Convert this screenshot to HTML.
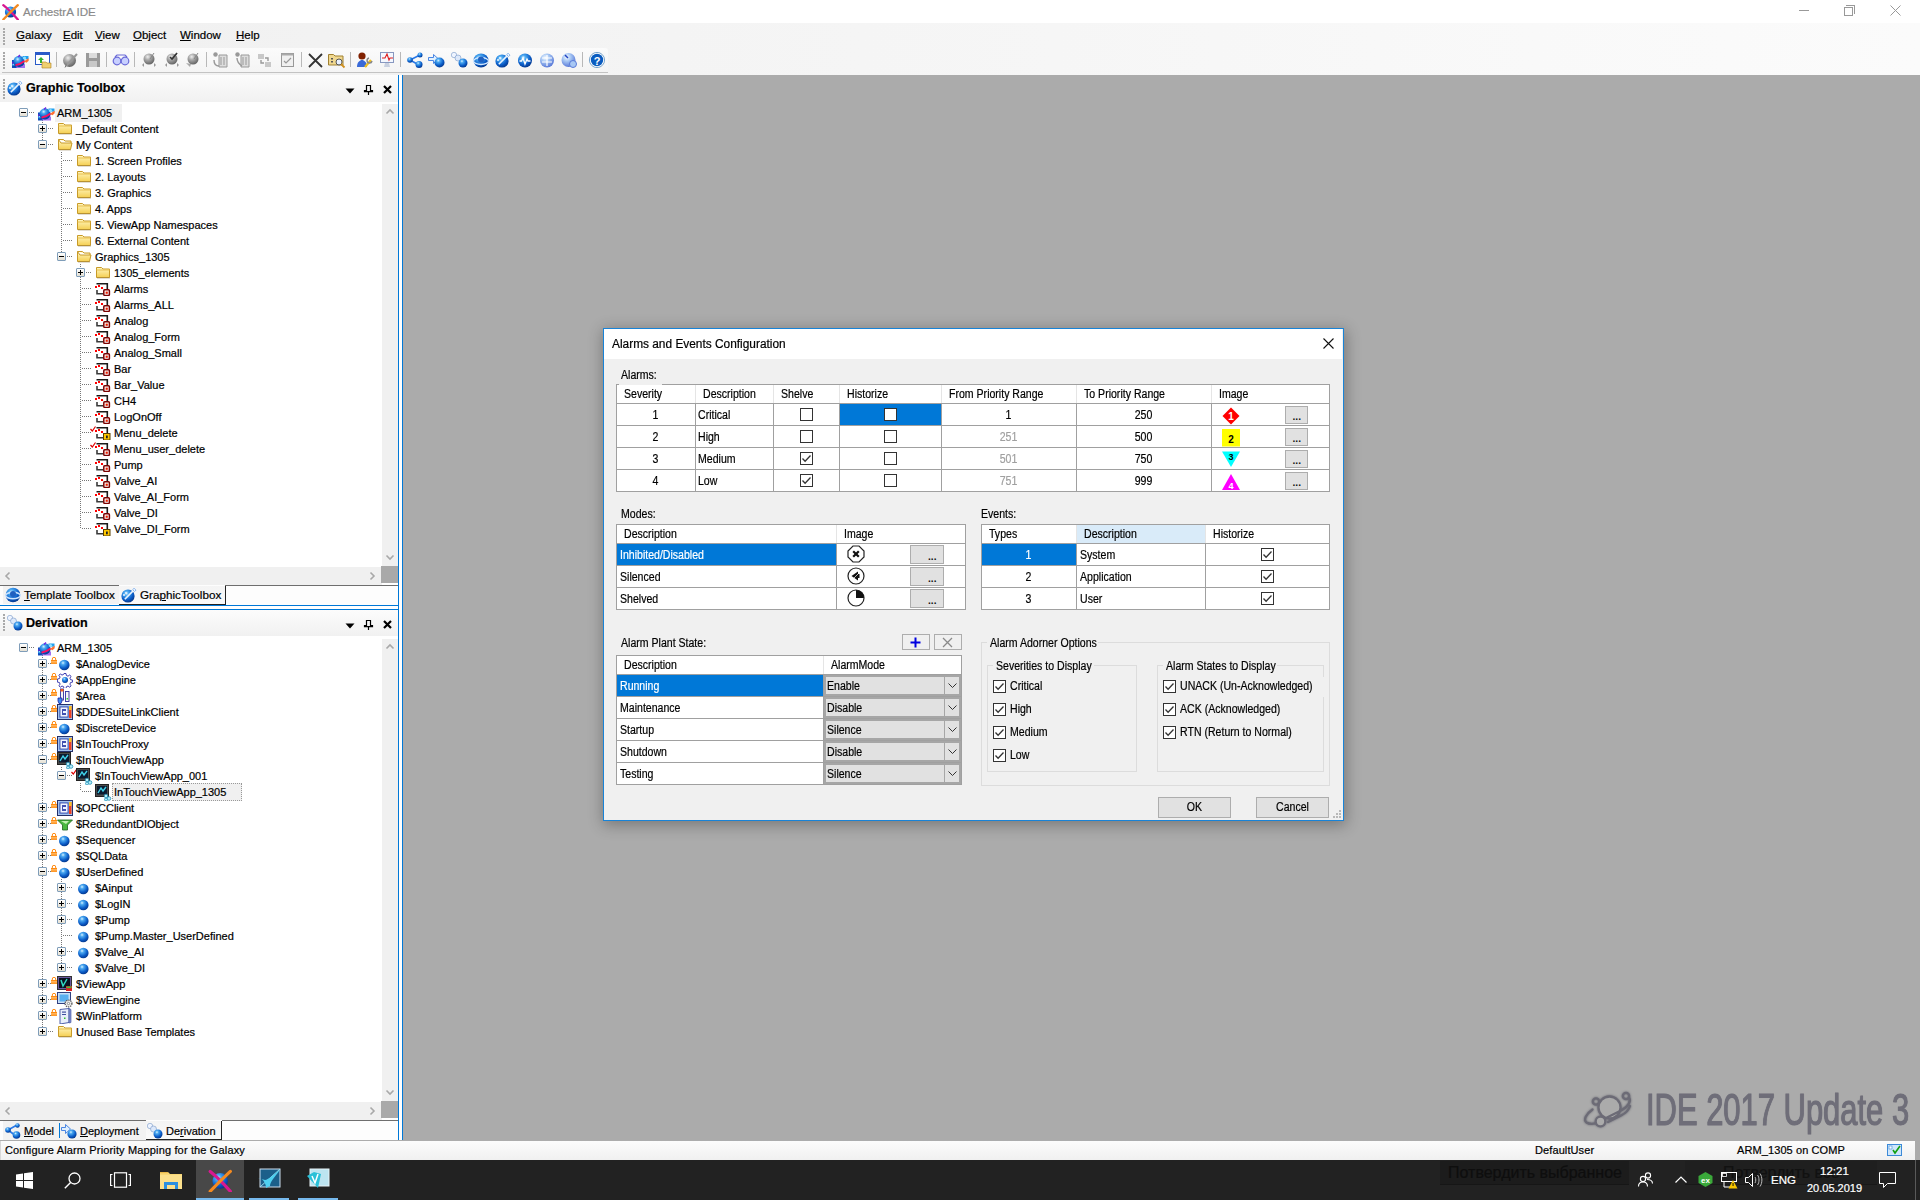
<!DOCTYPE html><html><head><meta charset="utf-8"><title>ArchestrA IDE</title><style>
*{box-sizing:border-box;margin:0;padding:0}
html,body{width:1920px;height:1200px;overflow:hidden;background:#ababab;font-family:"Liberation Sans",sans-serif;color:#000}
.a{position:absolute}
.t{position:absolute;white-space:nowrap;font-size:11px;line-height:16px}
.u{text-decoration:underline}
svg{position:absolute;overflow:visible}
.ds{font-size:12px;line-height:16px}
.t{-webkit-text-stroke:0.2px currentColor}
</style></head><body>
<svg width="0" height="0" style="position:absolute">
<defs>
<radialGradient id="gBall" cx="0.38" cy="0.3" r="0.7"><stop offset="0" stop-color="#d8f0ff"/><stop offset="0.25" stop-color="#4aa8f0"/><stop offset="0.7" stop-color="#0a5cc8"/><stop offset="1" stop-color="#063a90"/></radialGradient>
<radialGradient id="gGray" cx="0.38" cy="0.3" r="0.7"><stop offset="0" stop-color="#eee"/><stop offset="0.4" stop-color="#aaa"/><stop offset="1" stop-color="#666"/></radialGradient>
<radialGradient id="gPale" cx="0.38" cy="0.3" r="0.7"><stop offset="0" stop-color="#f4faff"/><stop offset="0.4" stop-color="#a8c8f4"/><stop offset="1" stop-color="#5a7ad8"/></radialGradient>
<linearGradient id="gFold" x1="0" y1="0" x2="0" y2="1"><stop offset="0" stop-color="#fff6c0"/><stop offset="1" stop-color="#f5cf52"/></linearGradient>
<linearGradient id="gExp" x1="0" y1="0" x2="0" y2="1"><stop offset="0" stop-color="#fff"/><stop offset="1" stop-color="#ddd6c6"/></linearGradient>
<symbol id="ico-arch" viewBox="0 0 18 18">
 <circle cx="9.5" cy="10" r="5.6" fill="url(#gBall)"/>
 <path d="M2.3 3.2Q9 8.5 16.8 17.5" fill="none" stroke="#d81890" stroke-width="2.3" stroke-linecap="round"/>
 <path d="M16.8 3.2Q10 9.5 2.3 17.5" fill="none" stroke="#f48a20" stroke-width="2.3" stroke-linecap="round"/>
</symbol>
<symbol id="ico-galaxy" viewBox="0 0 17 16">
 <rect x="4" y="12" width="9" height="4" fill="#a070f0"/>
 <rect x="0" y="8" width="4.5" height="8" fill="#1050c0"/>
 <circle cx="1.8" cy="13" r="2" fill="url(#gBall)"/>
 <rect x="0" y="10" width="4" height="1.5" fill="#6020d0"/>
 <circle cx="7" cy="9.4" r="5.6" fill="url(#gBall)"/>
 <path d="M6 5l2-2" stroke="#7020e0" stroke-width="1.3"/>
 <rect x="10.5" y="4" width="6" height="3.2" fill="#20a0f0"/>
 <circle cx="12.5" cy="6" r="1.6" fill="#8ee0ff"/>
 <path d="M3.5 13.2C7 12.5 10 11 12.5 9" stroke="#ff1060" stroke-width="1.8" fill="none"/>
 <path d="M12 9.5l2.5-2 2.2-1.2v2.5l-2.2 2z" fill="#ff7030"/>
</symbol>
<symbol id="ico-folder" viewBox="0 0 16 16">
 <path d="M1.5 3.5h5l1.5 1.5h6.5v8.5h-13z" fill="url(#gFold)" stroke="#c89a28" stroke-width="1"/>
 <path d="M1.5 6h13" stroke="#e8c050" stroke-width="1"/>
 <path d="M2 14h13" stroke="#8a7a50" stroke-width="1" opacity="0.5"/>
</symbol>
<symbol id="ico-folder-open" viewBox="0 0 16 16">
 <path d="M1.5 3.5h5l1.5 1.5h6v2" fill="#fff0b0" stroke="#c89a28" stroke-width="1"/>
 <path d="M1.5 3.5v10h12l1.5-6.5h-11z" fill="url(#gFold)" stroke="#c89a28" stroke-width="1"/>
 <path d="M2 14h12" stroke="#8a7a50" stroke-width="1" opacity="0.5"/>
</symbol>
<symbol id="ico-graphic" viewBox="0 0 16 16">
 <path d="M1.5 3.7H12.3V9.5" fill="none" stroke="#1a1a1a" stroke-width="1.6"/>
 <path d="M2 10V13.7H8.5" fill="none" stroke="#3a3a3a" stroke-width="1.6"/>
 <path d="M8 8.5L10 10.5" stroke="#9cc" stroke-width="0.8"/>
 <rect x="0" y="6" width="2" height="2" fill="#f00"/><rect x="3" y="5" width="2" height="2" fill="#f00"/><rect x="6" y="7" width="2" height="2" fill="#f00"/>
 <rect x="8.8" y="9.8" width="5.6" height="5.6" rx="1" fill="#fff" stroke="#7a0000" stroke-width="1.5"/>
 <rect x="10.6" y="11.6" width="2.2" height="2.2" fill="#e82000"/>
</symbol>
<symbol id="ico-graphic-y" viewBox="0 0 16 16">
 <path d="M1.5 3.7H12.3V9.5" fill="none" stroke="#1a1a1a" stroke-width="1.6"/>
 <path d="M2 10V13.7H8.5" fill="none" stroke="#3a3a3a" stroke-width="1.6"/>
 <rect x="0" y="6" width="2" height="2" fill="#f00"/><rect x="3" y="5" width="2" height="2" fill="#f00"/><rect x="6" y="7" width="2" height="2" fill="#f00"/>
 <rect x="8.5" y="9.5" width="6.5" height="6.5" fill="#ffc800" stroke="#5a4000" stroke-width="1"/>
 <rect x="11" y="11.5" width="1.8" height="2.8" fill="#222"/>
</symbol>
<symbol id="ico-sphere" viewBox="0 0 16 16">
 <circle cx="7.3" cy="9" r="5.3" fill="url(#gBall)"/>
</symbol>
<symbol id="ico-gear" viewBox="0 0 16 16">
 <path d="M7 1.5h2l.4 2 1.6.7 1.7-1.2 1.4 1.4-1.2 1.7.7 1.6 2 .4v2l-2 .4-.7 1.6 1.2 1.7-1.4 1.4-1.7-1.2-1.6.7-.4 2H7l-.4-2-1.6-.7-1.7 1.2-1.4-1.4 1.2-1.7-.7-1.6-2-.4V7l2-.4.7-1.6-1.2-1.7 1.4-1.4 1.7 1.2 1.6-.7z" fill="#fff" stroke="#2828a8" stroke-width="0.9"/>
 <circle cx="8" cy="8" r="3" fill="url(#gBall)"/>
</symbol>
<symbol id="ico-area" viewBox="0 0 16 16">
 <rect x="3.5" y="1" width="3" height="11" fill="#f4f4f4" stroke="#3030a0" stroke-width="0.9"/>
 <rect x="3.5" y="1" width="3" height="2.5" fill="#f06020"/>
 <rect x="8.5" y="3.5" width="3.5" height="10" fill="#f4f4f4" stroke="#3030a0" stroke-width="0.9"/>
 <rect x="9.5" y="10" width="1.5" height="1.5" fill="#30d030"/>
 <path d="M1 10h4v3l-1 2.5h-2l-1-2.5z" fill="#3c8ef0" stroke="#2020a0" stroke-width="0.8"/>
</symbol>
<symbol id="ico-box" viewBox="0 0 16 16">
 <rect x="0.5" y="0.5" width="15" height="15" fill="#c8d8f0" stroke="#24306a" stroke-width="1"/>
 <rect x="1.5" y="1.5" width="13" height="13" fill="#7fa8e8"/>
 <rect x="12" y="2" width="2.5" height="12" fill="#f04020"/><rect x="12" y="2" width="2.5" height="4" fill="#f8c020"/>
 <rect x="3" y="3" width="8" height="10" fill="#eef4ff" stroke="#3040a0" stroke-width="0.8"/>
 <path d="M5 5h4v2H6v2h3v2H5z" fill="#4050b0"/>
</symbol>
<symbol id="ico-itva" viewBox="0 0 17 17">
 <rect x="0.5" y="0.5" width="13" height="12" fill="#4a4a4a" stroke="#222" stroke-width="1"/>
 <rect x="2" y="2" width="10" height="8.5" fill="#0a1a30"/>
 <path d="M3 9l3-5 2 3 3-4" stroke="#40d0e8" stroke-width="1.4" fill="none"/>
 <circle cx="11" cy="12" r="1.8" fill="#b8ecf8" stroke="#2090b8" stroke-width="0.8"/>
 <circle cx="14" cy="14.5" r="1.8" fill="#b8ecf8" stroke="#2090b8" stroke-width="0.8"/>
 <circle cx="11" cy="15.5" r="1.5" fill="#b8ecf8" stroke="#2090b8" stroke-width="0.8"/>
</symbol>
<symbol id="ico-redund" viewBox="0 0 16 16">
 <path d="M0.5 4h15l-5 5v5h-5v-5z" fill="#4ab840" stroke="#206020" stroke-width="0.8"/>
 <path d="M4 5h8l-3 3" fill="#c0f0b0"/>
</symbol>
<symbol id="ico-viewapp" viewBox="0 0 16 16">
 <rect x="0.5" y="0.5" width="14" height="13" fill="#6858a0" stroke="#333" stroke-width="1"/>
 <rect x="2" y="2" width="11" height="10" fill="#0a1020"/>
 <path d="M4 4l2 6 4-7" stroke="#30d8c0" stroke-width="1.5" fill="none"/>
 <rect x="9" y="10" width="6" height="5" fill="#d82020"/><rect x="9.5" y="10.5" width="5" height="1.6" fill="#40c040"/>
</symbol>
<symbol id="ico-viewengine" viewBox="0 0 16 16">
 <rect x="0.5" y="0.5" width="13" height="11" fill="#c8e0f8" stroke="#304080" stroke-width="1"/>
 <rect x="2.5" y="2.5" width="9" height="7" fill="#5ab0f0"/>
 <circle cx="11.5" cy="11.5" r="3.4" fill="#eee" stroke="#555" stroke-width="1.3" stroke-dasharray="1.3 0.9"/>
 <circle cx="11.5" cy="11.5" r="1.2" fill="#fff" stroke="#555" stroke-width="0.6"/>
</symbol>
<symbol id="ico-winplat" viewBox="0 0 16 16">
 <path d="M3 1.5l9-1v14l-9 1.5z" fill="#e8eefa" stroke="#4050a0" stroke-width="0.9"/>
 <path d="M12 0.5l2 1v13l-2 0.5z" fill="#8090d0" stroke="#4050a0" stroke-width="0.6"/>
 <rect x="5" y="3.5" width="4" height="1.2" fill="#4050a0"/><rect x="5" y="6" width="4" height="1" fill="#4050a0"/>
 <rect x="7" y="9.5" width="1.5" height="1.5" fill="#30c030"/>
</symbol>
<symbol id="badge-lock" viewBox="0 0 6 7">
 <path d="M1.3 3V2a1.7 1.7 0 0 1 3.4 0v1" fill="none" stroke="#ff8a10" stroke-width="1"/>
 <rect x="0" y="3" width="6" height="4" fill="#ff8a10"/>
 <rect x="0" y="4.2" width="6" height="0.6" fill="#ffd090"/><rect x="0" y="5.6" width="6" height="0.6" fill="#ffd090"/>
</symbol>
<symbol id="badge-check" viewBox="0 0 6 6">
 <path d="M0.5 3l1.8 2L5.5 0.5" stroke="#e00000" stroke-width="1.2" fill="none"/>
</symbol>
<symbol id="ico-gtb" viewBox="0 0 16 16">
 <circle cx="7" cy="9" r="6.6" fill="url(#gBall)"/>
 <path d="M3.8 12.2L13.6 2.4" stroke="#eaf4ff" stroke-width="1.6"/>
 <path d="M13 1.2l2 2-1.6 1.2-1.6-1.6z" fill="#fff" stroke="#5a9ae8" stroke-width="0.7"/>
 <circle cx="3" cy="8" r="0.9" fill="#fff"/><circle cx="5" cy="6" r="0.9" fill="#e8f4ff"/>
</symbol>
<symbol id="ico-deriv" viewBox="0 0 16 16">
 <circle cx="3" cy="3" r="2.7" fill="#eef4ff" stroke="#7898c8" stroke-width="0.6"/>
 <circle cx="6.5" cy="6" r="3" fill="#dce8fa" stroke="#7898c8" stroke-width="0.6"/>
 <circle cx="11" cy="11" r="4.5" fill="url(#gBall)"/>
</symbol>
<symbol id="ico-model" viewBox="0 0 16 16">
 <path d="M3 7L12 2M3 7l8 6" stroke="#2a7ae8" stroke-width="1.6"/>
 <circle cx="3" cy="7" r="2.8" fill="url(#gBall)"/>
 <circle cx="12.5" cy="2.5" r="2.2" fill="url(#gBall)"/>
 <circle cx="11.5" cy="12" r="3.8" fill="url(#gBall)"/>
</symbol>
<symbol id="ico-deploy" viewBox="0 0 16 16">
 <path d="M0.5 4.5h4v-3l5 4.5-5 4.5v-3h-4z" fill="#e0f0ff" stroke="#3a7ae0" stroke-width="0.9"/>
 <circle cx="11" cy="11" r="4.6" fill="url(#gBall)"/>
</symbol>
<symbol id="ico-template" viewBox="0 0 16 16">
 <circle cx="8" cy="8" r="7.3" fill="url(#gBall)"/>
 <ellipse cx="8" cy="8.5" rx="7.3" ry="3.2" fill="none" stroke="#cfe6ff" stroke-width="1.4"/>
 <circle cx="8" cy="7" r="3" fill="#2060c0"/>
</symbol>
</defs>
</svg>
<div class="a" style="left:0px;top:0px;width:1920px;height:23px;background:#fff"></div><svg style="left:1px;top:2px" width="18" height="18" viewBox="0 0 18 18"><use href="#ico-arch"/></svg><div class="t" style="left:23px;top:4px;font-size:11.6px;line-height:16px;color:#8a8a8a">ArchestrA IDE</div><div class="a" style="left:1799px;top:10px;width:10px;height:1px;background:#999"></div><div class="a" style="left:1844px;top:7px;width:9px;height:9px;border:1px solid #999;background:#fff"></div><div class="a" style="left:1846px;top:5px;width:9px;height:9px;border-top:1px solid #999;border-right:1px solid #999"></div><svg style="left:1890px;top:5px" width="11" height="11"><path d="M0.5 0.5L10.5 10.5M10.5 0.5L0.5 10.5" stroke="#999" stroke-width="1"/></svg><div class="a" style="left:0px;top:23px;width:1920px;height:52px;background:linear-gradient(90deg,#f0f0f0 0%,#f3f3f3 25%,#f6f6f6 55%,#f9f9f9 80%,#fbfbfb 100%)"></div><div class="a" style="left:3px;top:28px;width:2px;height:2px;background:#a8a8a8"></div><div class="a" style="left:3px;top:31px;width:2px;height:2px;background:#a8a8a8"></div><div class="a" style="left:3px;top:34px;width:2px;height:2px;background:#a8a8a8"></div><div class="a" style="left:3px;top:37px;width:2px;height:2px;background:#a8a8a8"></div><div class="a" style="left:3px;top:40px;width:2px;height:2px;background:#a8a8a8"></div><div class="a" style="left:3px;top:43px;width:2px;height:2px;background:#a8a8a8"></div><div class="t" style="left:16px;top:27px;font-size:11.5px;line-height:16px"><u>G</u>alaxy</div><div class="t" style="left:63px;top:27px;font-size:11.5px;line-height:16px"><u>E</u>dit</div><div class="t" style="left:95px;top:27px;font-size:11.5px;line-height:16px"><u>V</u>iew</div><div class="t" style="left:133px;top:27px;font-size:11.5px;line-height:16px"><u>O</u>bject</div><div class="t" style="left:180px;top:27px;font-size:11.5px;line-height:16px"><u>W</u>indow</div><div class="t" style="left:236px;top:27px;font-size:11.5px;line-height:16px"><u>H</u>elp</div><div class="a" style="left:0px;top:48px;width:608px;height:25px;background:linear-gradient(#fbfbfb,#f4f4f4);border-top-right-radius:3px"></div><div class="a" style="left:2px;top:72px;width:606px;height:1px;background:#c3c3c3"></div><div class="a" style="left:3px;top:52px;width:2px;height:2px;background:#a8a8a8"></div><div class="a" style="left:3px;top:55px;width:2px;height:2px;background:#a8a8a8"></div><div class="a" style="left:3px;top:58px;width:2px;height:2px;background:#a8a8a8"></div><div class="a" style="left:3px;top:61px;width:2px;height:2px;background:#a8a8a8"></div><div class="a" style="left:3px;top:64px;width:2px;height:2px;background:#a8a8a8"></div><div class="a" style="left:3px;top:67px;width:2px;height:2px;background:#a8a8a8"></div><div class="a" style="left:56px;top:52px;width:1px;height:15px;background:#b8b8b8"></div><div class="a" style="left:106px;top:52px;width:1px;height:15px;background:#b8b8b8"></div><div class="a" style="left:134px;top:52px;width:1px;height:15px;background:#b8b8b8"></div><div class="a" style="left:206px;top:52px;width:1px;height:15px;background:#b8b8b8"></div><div class="a" style="left:301px;top:52px;width:1px;height:15px;background:#b8b8b8"></div><div class="a" style="left:350px;top:52px;width:1px;height:15px;background:#b8b8b8"></div><div class="a" style="left:400px;top:52px;width:1px;height:15px;background:#b8b8b8"></div><div class="a" style="left:582px;top:52px;width:1px;height:15px;background:#b8b8b8"></div><svg style="left:12px;top:52px" width="17" height="16" viewBox="0 0 17 16"><use href="#ico-galaxy"/></svg><svg style="left:35px;top:52px" width="16" height="16" viewBox="0 0 16 16"><rect x="0.5" y="0.5" width="14" height="12" fill="#fff" stroke="#2a5ac8"/><rect x="0.5" y="0.5" width="14" height="2.5" fill="#2a5ac8"/><path d="M3 8l3-3 3 3h-2v3H5V8z" fill="#30b030"/><path d="M7 10h4l1 1h4v5H7z" fill="#f0d070" stroke="#b08020" stroke-width="0.6"/></svg><svg style="left:62px;top:52px" width="17" height="16" viewBox="0 0 17 16"><circle cx="7.5" cy="8.5" r="6.5" fill="url(#gGray)"/><path d="M4 14L15 2" stroke="#999" stroke-width="2"/><path d="M3 15.5l1.5-3" stroke="#777" stroke-width="1"/></svg><svg style="left:86px;top:53px" width="14" height="14" viewBox="0 0 14 14"><rect x="0" y="0" width="14" height="14" fill="#9a9a9a"/><rect x="3" y="0" width="8" height="5" fill="#dcdcdc"/><rect x="3" y="8" width="8" height="6" fill="#c8c8c8"/></svg><svg style="left:113px;top:54px" width="16" height="12" viewBox="0 0 16 12"><circle cx="4" cy="7" r="3.8" fill="#c8d0ff" stroke="#6a6ad8" stroke-width="1.2"/><circle cx="12" cy="7" r="3.8" fill="#c8d0ff" stroke="#6a6ad8" stroke-width="1.2"/><path d="M2 3l2-2h8l2 2" fill="none" stroke="#6a6ad8" stroke-width="1.2"/></svg><svg style="left:141px;top:52px" width="16" height="16" viewBox="0 0 16 16"><circle cx="8" cy="7" r="5.5" fill="url(#gGray)"/><path d="M9 7l4-6" stroke="#888" stroke-width="1"/><path d="M1 13l2-2v4zM15 13l-2-2v4z" fill="#999"/></svg><svg style="left:164px;top:52px" width="16" height="16" viewBox="0 0 16 16"><circle cx="8" cy="7" r="5.5" fill="url(#gGray)"/><path d="M9 7l4-6" stroke="#888" stroke-width="1"/><path d="M6 5l2 2 5-6" stroke="#333" stroke-width="1.6" fill="none"/><path d="M1 13l2-2v4zM15 13l-2-2v4z" fill="#999"/></svg><svg style="left:185px;top:52px" width="16" height="16" viewBox="0 0 16 16"><circle cx="8" cy="7" r="5.5" fill="url(#gGray)"/><path d="M9 7l4-6" stroke="#888" stroke-width="1"/><path d="M1 11l4 4 1-3" fill="#aaa"/></svg><svg style="left:213px;top:52px" width="16" height="16" viewBox="0 0 16 16"><circle cx="2.5" cy="2.5" r="2.2" fill="#999"/><path d="M6 3h8v12H6z" fill="#ddd" stroke="#999"/><path d="M8 5v8M11 5v8" stroke="#999"/><path d="M1 8c0 4 2 6 5 6" stroke="#999" fill="none" stroke-width="1.4"/></svg><svg style="left:235px;top:52px" width="16" height="16" viewBox="0 0 16 16"><circle cx="2.5" cy="2.5" r="2.2" fill="#999"/><path d="M6 3h8v12H6z" fill="#ddd" stroke="#999"/><path d="M8 5v8M11 5v8" stroke="#999"/><path d="M2 6c0 4 2 6 5 8" stroke="#999" fill="none" stroke-width="1.4"/></svg><svg style="left:258px;top:54px" width="13" height="13" viewBox="0 0 13 13"><rect x="0" y="0" width="6" height="5" fill="#c8c8c8"/><rect x="7" y="8" width="6" height="5" fill="#c8c8c8"/><path d="M3 6v3h3M10 7V4H7" stroke="#999" fill="none" stroke-width="1.4"/></svg><svg style="left:281px;top:53px" width="13" height="14" viewBox="0 0 13 14"><rect x="0.5" y="0.5" width="12" height="13" fill="#f0f0f0" stroke="#999"/><rect x="0.5" y="0.5" width="12" height="2" fill="#aaa"/><path d="M3 8l2 2 5-5" stroke="#999" fill="none" stroke-width="1.2"/></svg><svg style="left:308px;top:53px" width="15" height="15" viewBox="0 0 15 15"><path d="M1 1l13 13M14 1L1 14" stroke="#333" stroke-width="1.8"/></svg><svg style="left:328px;top:52px" width="17" height="16" viewBox="0 0 17 16"><path d="M0.5 2.5h5l1.5 1.5h8v9h-14.5z" fill="#f0d890" stroke="#a08030"/><rect x="3" y="6" width="2" height="1.5" fill="#555"/><rect x="3" y="9" width="2" height="1.5" fill="#555"/><circle cx="11" cy="10" r="3" fill="#e8f0ff" stroke="#555"/><path d="M13 12l3.5 3.5" stroke="#d09020" stroke-width="1.8"/></svg><svg style="left:357px;top:52px" width="16" height="16" viewBox="0 0 16 16"><circle cx="5" cy="4" r="3.6" fill="#802000"/><path d="M0 15c0-5 3-7 5-7s5 2 5 7z" fill="#3a6ad8"/><path d="M8 15l6-7" stroke="#f0c020" stroke-width="2.2"/><path d="M12 6a2.5 2.5 0 1 0 3 3" stroke="#888" stroke-width="1.5" fill="none"/></svg><svg style="left:380px;top:52px" width="14" height="16" viewBox="0 0 14 16"><rect x="0.5" y="0.5" width="13" height="10" fill="#f4f8ff" stroke="#8898c0"/><path d="M2 6h3l2-4 2 6 1-2h3" stroke="#e02020" fill="none" stroke-width="1.1"/><path d="M5 11l-1 4h6l-1-4" fill="#c8d0e0"/></svg><svg style="left:407px;top:52px" width="16" height="16" viewBox="0 0 16 16"><path d="M3 8L13 3M3 8l9 5" stroke="#2a7ae8" stroke-width="1.6"/><circle cx="3" cy="8" r="2.8" fill="url(#gBall)"/><circle cx="13" cy="3" r="2.5" fill="url(#gBall)"/><circle cx="12" cy="12.5" r="3.5" fill="url(#gBall)"/></svg><svg style="left:428px;top:53px" width="17" height="15" viewBox="0 0 17 15"><path d="M0.5 4.5h5v-3l5 4.5-5 4.5v-3h-5z" fill="#e0f0ff" stroke="#3a7ae0" stroke-width="0.9"/><circle cx="11.5" cy="9.5" r="5" fill="url(#gBall)"/></svg><svg style="left:451px;top:52px" width="17" height="16" viewBox="0 0 17 16"><circle cx="3" cy="3" r="2.7" fill="#eef4ff" stroke="#7898c8" stroke-width="0.6"/><circle cx="7" cy="6" r="3" fill="#dce8fa" stroke="#7898c8" stroke-width="0.6"/><circle cx="12" cy="11" r="4.5" fill="url(#gBall)"/></svg><svg style="left:473px;top:53px" width="16" height="15" viewBox="0 0 16 15"><ellipse cx="8" cy="7.5" rx="7.5" ry="7" fill="url(#gBall)"/><ellipse cx="8" cy="8" rx="7.5" ry="3.5" fill="none" stroke="#cfe6ff" stroke-width="1.4"/><circle cx="8" cy="6.5" r="3" fill="#2060c0"/></svg><svg style="left:495px;top:52px" width="16" height="16" viewBox="0 0 16 16"><use href="#ico-gtb"/></svg><svg style="left:517px;top:52px" width="16" height="16" viewBox="0 0 16 16"><circle cx="8" cy="8.5" r="7" fill="url(#gBall)"/><path d="M2.5 9h2l1.5-3 2 6 2-5 1 2h2.5" stroke="#fff" stroke-width="1.3" fill="none"/></svg><svg style="left:539px;top:52px" width="16" height="16" viewBox="0 0 16 16"><circle cx="8" cy="8.5" r="7" fill="url(#gPale)"/><path d="M3 6h10M3 10h10M8 3v11" stroke="#fff" stroke-width="1.2"/></svg><svg style="left:561px;top:52px" width="16" height="16" viewBox="0 0 16 16"><circle cx="7.5" cy="8" r="7" fill="url(#gPale)"/><circle cx="12" cy="12" r="3.5" fill="#a8c8f4" stroke="#5a7ad8"/><path d="M4 3l3 3" stroke="#2040c0" stroke-width="1.5"/></svg><svg style="left:589px;top:52px" width="16" height="16" viewBox="0 0 16 16"><circle cx="8" cy="8" r="7.6" fill="#fff" stroke="#5a90c0" stroke-width="0.8"/><circle cx="8" cy="8" r="6.2" fill="#0a5cc0"/><text x="8" y="12.5" font-family="Liberation Sans" font-weight="bold" font-size="11" fill="#fff" text-anchor="middle">?</text></svg><div class="a" style="left:0px;top:75px;width:398px;height:1066px;background:#fff"></div><div class="a" style="left:0px;top:75px;width:398px;height:27px;background:linear-gradient(#fcfcfc,#f1f1f1)"></div><div class="a" style="left:3px;top:79px;width:2px;height:2px;background:#a9a9a9"></div><div class="a" style="left:3px;top:82px;width:2px;height:2px;background:#a9a9a9"></div><div class="a" style="left:3px;top:85px;width:2px;height:2px;background:#a9a9a9"></div><div class="a" style="left:3px;top:88px;width:2px;height:2px;background:#a9a9a9"></div><div class="a" style="left:3px;top:91px;width:2px;height:2px;background:#a9a9a9"></div><div class="a" style="left:3px;top:94px;width:2px;height:2px;background:#a9a9a9"></div><div class="a" style="left:3px;top:97px;width:2px;height:2px;background:#a9a9a9"></div><svg style="left:7px;top:80px" width="16" height="16" viewBox="0 0 16 16"><use href="#ico-gtb"/></svg><div class="t" style="left:26px;top:80px;font-size:12.6px;line-height:16px;font-weight:bold">Graphic Toolbox</div><svg style="left:345px;top:88px" width="10" height="6" viewBox="0 0 10 6"><path d="M0.5 0.5h9l-4.5 5z" fill="#000"/></svg><svg style="left:364px;top:85px" width="9" height="10" viewBox="0 0 9 10"><path d="M2.5 0.5h4v5h2v1.2h-8v-1.2h2z" fill="none" stroke="#000" stroke-width="1.2"/><path d="M4.5 6.5v3.5" stroke="#000" stroke-width="1.2"/></svg><svg style="left:383px;top:85px" width="9" height="9" viewBox="0 0 9 9"><path d="M1 1l7 7M8 1l-7 7" stroke="#000" stroke-width="2.2"/></svg><div class="a" style="left:382px;top:104px;width:16px;height:463px;background:#f0f0f0"></div><svg style="left:386px;top:109px" width="8" height="5" viewBox="0 0 8 5"><path d="M0.5 4.5L4 1l3.5 3.5" fill="none" stroke="#a8a8a8" stroke-width="1.6"/></svg><svg style="left:386px;top:555px" width="8" height="5" viewBox="0 0 8 5"><path d="M0.5 0.5L4 4l3.5-3.5" fill="none" stroke="#a8a8a8" stroke-width="1.6"/></svg><div class="a" style="left:0px;top:567px;width:382px;height:18px;background:#f0f0f0"></div><svg style="left:5px;top:572px" width="5" height="8" viewBox="0 0 5 8"><path d="M4.5 0.5L1 4l3.5 3.5" fill="none" stroke="#a8a8a8" stroke-width="1.6"/></svg><svg style="left:370px;top:572px" width="5" height="8" viewBox="0 0 5 8"><path d="M0.5 0.5L4 4L0.5 7.5" fill="none" stroke="#a8a8a8" stroke-width="1.6"/></svg><div class="a" style="left:381px;top:566px;width:17px;height:17px;background:#a9a9a9"></div><div class="a" style="left:25px;top:112px;width:10px;height:1px;background:repeating-linear-gradient(90deg,#777 0 1px,transparent 1px 2px)"></div><div class="a" style="left:42px;top:120px;width:1px;height:8px;background:repeating-linear-gradient(180deg,#777 0 1px,transparent 1px 2px)"></div><div class="a" style="left:44px;top:128px;width:10px;height:1px;background:repeating-linear-gradient(90deg,#777 0 1px,transparent 1px 2px)"></div><div class="a" style="left:42px;top:129px;width:1px;height:15px;background:repeating-linear-gradient(180deg,#777 0 1px,transparent 1px 2px)"></div><div class="a" style="left:44px;top:144px;width:10px;height:1px;background:repeating-linear-gradient(90deg,#777 0 1px,transparent 1px 2px)"></div><div class="a" style="left:61px;top:152px;width:1px;height:8px;background:repeating-linear-gradient(180deg,#777 0 1px,transparent 1px 2px)"></div><div class="a" style="left:63px;top:160px;width:10px;height:1px;background:repeating-linear-gradient(90deg,#777 0 1px,transparent 1px 2px)"></div><div class="a" style="left:61px;top:161px;width:1px;height:15px;background:repeating-linear-gradient(180deg,#777 0 1px,transparent 1px 2px)"></div><div class="a" style="left:63px;top:176px;width:10px;height:1px;background:repeating-linear-gradient(90deg,#777 0 1px,transparent 1px 2px)"></div><div class="a" style="left:61px;top:177px;width:1px;height:15px;background:repeating-linear-gradient(180deg,#777 0 1px,transparent 1px 2px)"></div><div class="a" style="left:63px;top:192px;width:10px;height:1px;background:repeating-linear-gradient(90deg,#777 0 1px,transparent 1px 2px)"></div><div class="a" style="left:61px;top:193px;width:1px;height:15px;background:repeating-linear-gradient(180deg,#777 0 1px,transparent 1px 2px)"></div><div class="a" style="left:63px;top:208px;width:10px;height:1px;background:repeating-linear-gradient(90deg,#777 0 1px,transparent 1px 2px)"></div><div class="a" style="left:61px;top:209px;width:1px;height:15px;background:repeating-linear-gradient(180deg,#777 0 1px,transparent 1px 2px)"></div><div class="a" style="left:63px;top:224px;width:10px;height:1px;background:repeating-linear-gradient(90deg,#777 0 1px,transparent 1px 2px)"></div><div class="a" style="left:61px;top:225px;width:1px;height:15px;background:repeating-linear-gradient(180deg,#777 0 1px,transparent 1px 2px)"></div><div class="a" style="left:63px;top:240px;width:10px;height:1px;background:repeating-linear-gradient(90deg,#777 0 1px,transparent 1px 2px)"></div><div class="a" style="left:61px;top:241px;width:1px;height:15px;background:repeating-linear-gradient(180deg,#777 0 1px,transparent 1px 2px)"></div><div class="a" style="left:63px;top:256px;width:10px;height:1px;background:repeating-linear-gradient(90deg,#777 0 1px,transparent 1px 2px)"></div><div class="a" style="left:80px;top:264px;width:1px;height:8px;background:repeating-linear-gradient(180deg,#777 0 1px,transparent 1px 2px)"></div><div class="a" style="left:82px;top:272px;width:10px;height:1px;background:repeating-linear-gradient(90deg,#777 0 1px,transparent 1px 2px)"></div><div class="a" style="left:80px;top:273px;width:1px;height:15px;background:repeating-linear-gradient(180deg,#777 0 1px,transparent 1px 2px)"></div><div class="a" style="left:82px;top:288px;width:10px;height:1px;background:repeating-linear-gradient(90deg,#777 0 1px,transparent 1px 2px)"></div><div class="a" style="left:80px;top:289px;width:1px;height:15px;background:repeating-linear-gradient(180deg,#777 0 1px,transparent 1px 2px)"></div><div class="a" style="left:82px;top:304px;width:10px;height:1px;background:repeating-linear-gradient(90deg,#777 0 1px,transparent 1px 2px)"></div><div class="a" style="left:80px;top:305px;width:1px;height:15px;background:repeating-linear-gradient(180deg,#777 0 1px,transparent 1px 2px)"></div><div class="a" style="left:82px;top:320px;width:10px;height:1px;background:repeating-linear-gradient(90deg,#777 0 1px,transparent 1px 2px)"></div><div class="a" style="left:80px;top:321px;width:1px;height:15px;background:repeating-linear-gradient(180deg,#777 0 1px,transparent 1px 2px)"></div><div class="a" style="left:82px;top:336px;width:10px;height:1px;background:repeating-linear-gradient(90deg,#777 0 1px,transparent 1px 2px)"></div><div class="a" style="left:80px;top:337px;width:1px;height:15px;background:repeating-linear-gradient(180deg,#777 0 1px,transparent 1px 2px)"></div><div class="a" style="left:82px;top:352px;width:10px;height:1px;background:repeating-linear-gradient(90deg,#777 0 1px,transparent 1px 2px)"></div><div class="a" style="left:80px;top:353px;width:1px;height:15px;background:repeating-linear-gradient(180deg,#777 0 1px,transparent 1px 2px)"></div><div class="a" style="left:82px;top:368px;width:10px;height:1px;background:repeating-linear-gradient(90deg,#777 0 1px,transparent 1px 2px)"></div><div class="a" style="left:80px;top:369px;width:1px;height:15px;background:repeating-linear-gradient(180deg,#777 0 1px,transparent 1px 2px)"></div><div class="a" style="left:82px;top:384px;width:10px;height:1px;background:repeating-linear-gradient(90deg,#777 0 1px,transparent 1px 2px)"></div><div class="a" style="left:80px;top:385px;width:1px;height:15px;background:repeating-linear-gradient(180deg,#777 0 1px,transparent 1px 2px)"></div><div class="a" style="left:82px;top:400px;width:10px;height:1px;background:repeating-linear-gradient(90deg,#777 0 1px,transparent 1px 2px)"></div><div class="a" style="left:80px;top:401px;width:1px;height:15px;background:repeating-linear-gradient(180deg,#777 0 1px,transparent 1px 2px)"></div><div class="a" style="left:82px;top:416px;width:10px;height:1px;background:repeating-linear-gradient(90deg,#777 0 1px,transparent 1px 2px)"></div><div class="a" style="left:80px;top:417px;width:1px;height:15px;background:repeating-linear-gradient(180deg,#777 0 1px,transparent 1px 2px)"></div><div class="a" style="left:82px;top:432px;width:10px;height:1px;background:repeating-linear-gradient(90deg,#777 0 1px,transparent 1px 2px)"></div><div class="a" style="left:80px;top:433px;width:1px;height:15px;background:repeating-linear-gradient(180deg,#777 0 1px,transparent 1px 2px)"></div><div class="a" style="left:82px;top:448px;width:10px;height:1px;background:repeating-linear-gradient(90deg,#777 0 1px,transparent 1px 2px)"></div><div class="a" style="left:80px;top:449px;width:1px;height:15px;background:repeating-linear-gradient(180deg,#777 0 1px,transparent 1px 2px)"></div><div class="a" style="left:82px;top:464px;width:10px;height:1px;background:repeating-linear-gradient(90deg,#777 0 1px,transparent 1px 2px)"></div><div class="a" style="left:80px;top:465px;width:1px;height:15px;background:repeating-linear-gradient(180deg,#777 0 1px,transparent 1px 2px)"></div><div class="a" style="left:82px;top:480px;width:10px;height:1px;background:repeating-linear-gradient(90deg,#777 0 1px,transparent 1px 2px)"></div><div class="a" style="left:80px;top:481px;width:1px;height:15px;background:repeating-linear-gradient(180deg,#777 0 1px,transparent 1px 2px)"></div><div class="a" style="left:82px;top:496px;width:10px;height:1px;background:repeating-linear-gradient(90deg,#777 0 1px,transparent 1px 2px)"></div><div class="a" style="left:80px;top:497px;width:1px;height:15px;background:repeating-linear-gradient(180deg,#777 0 1px,transparent 1px 2px)"></div><div class="a" style="left:82px;top:512px;width:10px;height:1px;background:repeating-linear-gradient(90deg,#777 0 1px,transparent 1px 2px)"></div><div class="a" style="left:80px;top:513px;width:1px;height:15px;background:repeating-linear-gradient(180deg,#777 0 1px,transparent 1px 2px)"></div><div class="a" style="left:82px;top:528px;width:10px;height:1px;background:repeating-linear-gradient(90deg,#777 0 1px,transparent 1px 2px)"></div><div class="a" style="left:19px;top:108px;width:9px;height:9px;border:1px solid #7f9db9;border-radius:1px;background:linear-gradient(#fff,#e4dfd2)"></div><div class="a" style="left:21px;top:112px;width:5px;height:1px;background:#000"></div><div class="a" style="left:55px;top:104px;width:67px;height:18px;background:#f0f0f0"></div><svg style="left:38px;top:104px" width="17" height="17" viewBox="0 0 17 17"><use href="#ico-galaxy"/></svg><div class="t" style="left:57px;top:105px;font-size:11px;line-height:16px">ARM_1305</div><div class="a" style="left:38px;top:124px;width:9px;height:9px;border:1px solid #7f9db9;border-radius:1px;background:linear-gradient(#fff,#e4dfd2)"></div><div class="a" style="left:40px;top:128px;width:5px;height:1px;background:#000"></div><div class="a" style="left:42px;top:126px;width:1px;height:5px;background:#000"></div><svg style="left:57px;top:120px" width="16" height="16" viewBox="0 0 16 16"><use href="#ico-folder"/></svg><div class="t" style="left:76px;top:121px;font-size:11px;line-height:16px">_Default Content</div><div class="a" style="left:38px;top:140px;width:9px;height:9px;border:1px solid #7f9db9;border-radius:1px;background:linear-gradient(#fff,#e4dfd2)"></div><div class="a" style="left:40px;top:144px;width:5px;height:1px;background:#000"></div><svg style="left:57px;top:136px" width="16" height="16" viewBox="0 0 16 16"><use href="#ico-folder-open"/></svg><div class="t" style="left:76px;top:137px;font-size:11px;line-height:16px">My Content</div><svg style="left:76px;top:152px" width="16" height="16" viewBox="0 0 16 16"><use href="#ico-folder"/></svg><div class="t" style="left:95px;top:153px;font-size:11px;line-height:16px">1. Screen Profiles</div><svg style="left:76px;top:168px" width="16" height="16" viewBox="0 0 16 16"><use href="#ico-folder"/></svg><div class="t" style="left:95px;top:169px;font-size:11px;line-height:16px">2. Layouts</div><svg style="left:76px;top:184px" width="16" height="16" viewBox="0 0 16 16"><use href="#ico-folder"/></svg><div class="t" style="left:95px;top:185px;font-size:11px;line-height:16px">3. Graphics</div><svg style="left:76px;top:200px" width="16" height="16" viewBox="0 0 16 16"><use href="#ico-folder"/></svg><div class="t" style="left:95px;top:201px;font-size:11px;line-height:16px">4. Apps</div><svg style="left:76px;top:216px" width="16" height="16" viewBox="0 0 16 16"><use href="#ico-folder"/></svg><div class="t" style="left:95px;top:217px;font-size:11px;line-height:16px">5. ViewApp Namespaces</div><svg style="left:76px;top:232px" width="16" height="16" viewBox="0 0 16 16"><use href="#ico-folder"/></svg><div class="t" style="left:95px;top:233px;font-size:11px;line-height:16px">6. External Content</div><div class="a" style="left:57px;top:252px;width:9px;height:9px;border:1px solid #7f9db9;border-radius:1px;background:linear-gradient(#fff,#e4dfd2)"></div><div class="a" style="left:59px;top:256px;width:5px;height:1px;background:#000"></div><svg style="left:76px;top:248px" width="16" height="16" viewBox="0 0 16 16"><use href="#ico-folder-open"/></svg><div class="t" style="left:95px;top:249px;font-size:11px;line-height:16px">Graphics_1305</div><div class="a" style="left:76px;top:268px;width:9px;height:9px;border:1px solid #7f9db9;border-radius:1px;background:linear-gradient(#fff,#e4dfd2)"></div><div class="a" style="left:78px;top:272px;width:5px;height:1px;background:#000"></div><div class="a" style="left:80px;top:270px;width:1px;height:5px;background:#000"></div><svg style="left:95px;top:264px" width="16" height="16" viewBox="0 0 16 16"><use href="#ico-folder"/></svg><div class="t" style="left:114px;top:265px;font-size:11px;line-height:16px">1305_elements</div><svg style="left:95px;top:280px" width="16" height="16" viewBox="0 0 16 16"><use href="#ico-graphic"/></svg><div class="t" style="left:114px;top:281px;font-size:11px;line-height:16px">Alarms</div><svg style="left:95px;top:296px" width="16" height="16" viewBox="0 0 16 16"><use href="#ico-graphic"/></svg><div class="t" style="left:114px;top:297px;font-size:11px;line-height:16px">Alarms_ALL</div><svg style="left:95px;top:312px" width="16" height="16" viewBox="0 0 16 16"><use href="#ico-graphic"/></svg><div class="t" style="left:114px;top:313px;font-size:11px;line-height:16px">Analog</div><svg style="left:95px;top:328px" width="16" height="16" viewBox="0 0 16 16"><use href="#ico-graphic"/></svg><div class="t" style="left:114px;top:329px;font-size:11px;line-height:16px">Analog_Form</div><svg style="left:95px;top:344px" width="16" height="16" viewBox="0 0 16 16"><use href="#ico-graphic"/></svg><div class="t" style="left:114px;top:345px;font-size:11px;line-height:16px">Analog_Small</div><svg style="left:95px;top:360px" width="16" height="16" viewBox="0 0 16 16"><use href="#ico-graphic"/></svg><div class="t" style="left:114px;top:361px;font-size:11px;line-height:16px">Bar</div><svg style="left:95px;top:376px" width="16" height="16" viewBox="0 0 16 16"><use href="#ico-graphic"/></svg><div class="t" style="left:114px;top:377px;font-size:11px;line-height:16px">Bar_Value</div><svg style="left:95px;top:392px" width="16" height="16" viewBox="0 0 16 16"><use href="#ico-graphic"/></svg><div class="t" style="left:114px;top:393px;font-size:11px;line-height:16px">CH4</div><svg style="left:95px;top:408px" width="16" height="16" viewBox="0 0 16 16"><use href="#ico-graphic"/></svg><div class="t" style="left:114px;top:409px;font-size:11px;line-height:16px">LogOnOff</div><svg style="left:90px;top:426px" width="6" height="6" viewBox="0 0 6 6"><use href="#badge-check"/></svg><svg style="left:95px;top:424px" width="16" height="16" viewBox="0 0 16 16"><use href="#ico-graphic-y"/></svg><div class="t" style="left:114px;top:425px;font-size:11px;line-height:16px">Menu_delete</div><svg style="left:90px;top:442px" width="6" height="6" viewBox="0 0 6 6"><use href="#badge-check"/></svg><svg style="left:95px;top:440px" width="16" height="16" viewBox="0 0 16 16"><use href="#ico-graphic"/></svg><div class="t" style="left:114px;top:441px;font-size:11px;line-height:16px">Menu_user_delete</div><svg style="left:95px;top:456px" width="16" height="16" viewBox="0 0 16 16"><use href="#ico-graphic"/></svg><div class="t" style="left:114px;top:457px;font-size:11px;line-height:16px">Pump</div><svg style="left:95px;top:472px" width="16" height="16" viewBox="0 0 16 16"><use href="#ico-graphic"/></svg><div class="t" style="left:114px;top:473px;font-size:11px;line-height:16px">Valve_AI</div><svg style="left:95px;top:488px" width="16" height="16" viewBox="0 0 16 16"><use href="#ico-graphic"/></svg><div class="t" style="left:114px;top:489px;font-size:11px;line-height:16px">Valve_AI_Form</div><svg style="left:95px;top:504px" width="16" height="16" viewBox="0 0 16 16"><use href="#ico-graphic"/></svg><div class="t" style="left:114px;top:505px;font-size:11px;line-height:16px">Valve_DI</div><svg style="left:95px;top:520px" width="16" height="16" viewBox="0 0 16 16"><use href="#ico-graphic-y"/></svg><div class="t" style="left:114px;top:521px;font-size:11px;line-height:16px">Valve_DI_Form</div><div class="a" style="left:0px;top:585px;width:398px;height:20px;background:#fdfdfd"></div><div class="a" style="left:0px;top:585px;width:119px;height:1px;background:#6e6e6e"></div><div class="a" style="left:225px;top:585px;width:173px;height:1px;background:#6e6e6e"></div><div class="a" style="left:3px;top:586px;width:116px;height:18px;background:#f2f2f2"></div><div class="a" style="left:119px;top:586px;width:107px;height:19px;background:linear-gradient(#f4f4f4,#fafafa);border-right:1px solid #222;border-bottom:1px solid #222"></div><svg style="left:5px;top:587px" width="16" height="16" viewBox="0 0 16 16"><use href="#ico-template"/></svg><div class="t" style="left:24px;top:587px;font-size:11.7px;line-height:16px"><u>T</u>emplate Toolbox</div><svg style="left:121px;top:587px" width="16" height="16" viewBox="0 0 16 16"><use href="#ico-gtb"/></svg><div class="t" style="left:140px;top:587px;font-size:11.7px;line-height:16px">Gra<u>p</u>hicToolbox</div><div class="a" style="left:0px;top:605px;width:398px;height:1px;background:#0078d7"></div><div class="a" style="left:0px;top:609px;width:398px;height:1px;background:#0078d7"></div><div class="a" style="left:0px;top:606px;width:398px;height:3px;background:#fff"></div><div class="a" style="left:0px;top:610px;width:398px;height:26px;background:linear-gradient(#fcfcfc,#f1f1f1)"></div><div class="a" style="left:3px;top:614px;width:2px;height:2px;background:#a9a9a9"></div><div class="a" style="left:3px;top:617px;width:2px;height:2px;background:#a9a9a9"></div><div class="a" style="left:3px;top:620px;width:2px;height:2px;background:#a9a9a9"></div><div class="a" style="left:3px;top:623px;width:2px;height:2px;background:#a9a9a9"></div><div class="a" style="left:3px;top:626px;width:2px;height:2px;background:#a9a9a9"></div><div class="a" style="left:3px;top:629px;width:2px;height:2px;background:#a9a9a9"></div><svg style="left:7px;top:615px" width="16" height="16" viewBox="0 0 16 16"><use href="#ico-deriv"/></svg><div class="t" style="left:26px;top:615px;font-size:12.6px;line-height:16px;font-weight:bold">Derivation</div><svg style="left:345px;top:623px" width="10" height="6" viewBox="0 0 10 6"><path d="M0.5 0.5h9l-4.5 5z" fill="#000"/></svg><svg style="left:364px;top:620px" width="9" height="10" viewBox="0 0 9 10"><path d="M2.5 0.5h4v5h2v1.2h-8v-1.2h2z" fill="none" stroke="#000" stroke-width="1.2"/><path d="M4.5 6.5v3.5" stroke="#000" stroke-width="1.2"/></svg><svg style="left:383px;top:620px" width="9" height="9" viewBox="0 0 9 9"><path d="M1 1l7 7M8 1l-7 7" stroke="#000" stroke-width="2.2"/></svg><div class="a" style="left:382px;top:639px;width:16px;height:463px;background:#f0f0f0"></div><svg style="left:386px;top:644px" width="8" height="5" viewBox="0 0 8 5"><path d="M0.5 4.5L4 1l3.5 3.5" fill="none" stroke="#a8a8a8" stroke-width="1.6"/></svg><svg style="left:386px;top:1090px" width="8" height="5" viewBox="0 0 8 5"><path d="M0.5 0.5L4 4l3.5-3.5" fill="none" stroke="#a8a8a8" stroke-width="1.6"/></svg><div class="a" style="left:0px;top:1102px;width:382px;height:18px;background:#f0f0f0"></div><svg style="left:5px;top:1107px" width="5" height="8" viewBox="0 0 5 8"><path d="M4.5 0.5L1 4l3.5 3.5" fill="none" stroke="#a8a8a8" stroke-width="1.6"/></svg><svg style="left:370px;top:1107px" width="5" height="8" viewBox="0 0 5 8"><path d="M0.5 0.5L4 4L0.5 7.5" fill="none" stroke="#a8a8a8" stroke-width="1.6"/></svg><div class="a" style="left:381px;top:1101px;width:17px;height:17px;background:#a9a9a9"></div><div class="a" style="left:25px;top:647px;width:10px;height:1px;background:repeating-linear-gradient(90deg,#777 0 1px,transparent 1px 2px)"></div><div class="a" style="left:42px;top:655px;width:1px;height:8px;background:repeating-linear-gradient(180deg,#777 0 1px,transparent 1px 2px)"></div><div class="a" style="left:44px;top:663px;width:7px;height:1px;background:repeating-linear-gradient(90deg,#777 0 1px,transparent 1px 2px)"></div><div class="a" style="left:42px;top:664px;width:1px;height:15px;background:repeating-linear-gradient(180deg,#777 0 1px,transparent 1px 2px)"></div><div class="a" style="left:44px;top:679px;width:7px;height:1px;background:repeating-linear-gradient(90deg,#777 0 1px,transparent 1px 2px)"></div><div class="a" style="left:42px;top:680px;width:1px;height:15px;background:repeating-linear-gradient(180deg,#777 0 1px,transparent 1px 2px)"></div><div class="a" style="left:44px;top:695px;width:7px;height:1px;background:repeating-linear-gradient(90deg,#777 0 1px,transparent 1px 2px)"></div><div class="a" style="left:42px;top:696px;width:1px;height:15px;background:repeating-linear-gradient(180deg,#777 0 1px,transparent 1px 2px)"></div><div class="a" style="left:44px;top:711px;width:7px;height:1px;background:repeating-linear-gradient(90deg,#777 0 1px,transparent 1px 2px)"></div><div class="a" style="left:42px;top:712px;width:1px;height:15px;background:repeating-linear-gradient(180deg,#777 0 1px,transparent 1px 2px)"></div><div class="a" style="left:44px;top:727px;width:7px;height:1px;background:repeating-linear-gradient(90deg,#777 0 1px,transparent 1px 2px)"></div><div class="a" style="left:42px;top:728px;width:1px;height:15px;background:repeating-linear-gradient(180deg,#777 0 1px,transparent 1px 2px)"></div><div class="a" style="left:44px;top:743px;width:7px;height:1px;background:repeating-linear-gradient(90deg,#777 0 1px,transparent 1px 2px)"></div><div class="a" style="left:42px;top:744px;width:1px;height:15px;background:repeating-linear-gradient(180deg,#777 0 1px,transparent 1px 2px)"></div><div class="a" style="left:44px;top:759px;width:7px;height:1px;background:repeating-linear-gradient(90deg,#777 0 1px,transparent 1px 2px)"></div><div class="a" style="left:61px;top:767px;width:1px;height:8px;background:repeating-linear-gradient(180deg,#777 0 1px,transparent 1px 2px)"></div><div class="a" style="left:63px;top:775px;width:10px;height:1px;background:repeating-linear-gradient(90deg,#777 0 1px,transparent 1px 2px)"></div><div class="a" style="left:80px;top:783px;width:1px;height:8px;background:repeating-linear-gradient(180deg,#777 0 1px,transparent 1px 2px)"></div><div class="a" style="left:82px;top:791px;width:10px;height:1px;background:repeating-linear-gradient(90deg,#777 0 1px,transparent 1px 2px)"></div><div class="a" style="left:42px;top:760px;width:1px;height:47px;background:repeating-linear-gradient(180deg,#777 0 1px,transparent 1px 2px)"></div><div class="a" style="left:44px;top:807px;width:7px;height:1px;background:repeating-linear-gradient(90deg,#777 0 1px,transparent 1px 2px)"></div><div class="a" style="left:42px;top:808px;width:1px;height:15px;background:repeating-linear-gradient(180deg,#777 0 1px,transparent 1px 2px)"></div><div class="a" style="left:44px;top:823px;width:7px;height:1px;background:repeating-linear-gradient(90deg,#777 0 1px,transparent 1px 2px)"></div><div class="a" style="left:42px;top:824px;width:1px;height:15px;background:repeating-linear-gradient(180deg,#777 0 1px,transparent 1px 2px)"></div><div class="a" style="left:44px;top:839px;width:7px;height:1px;background:repeating-linear-gradient(90deg,#777 0 1px,transparent 1px 2px)"></div><div class="a" style="left:42px;top:840px;width:1px;height:15px;background:repeating-linear-gradient(180deg,#777 0 1px,transparent 1px 2px)"></div><div class="a" style="left:44px;top:855px;width:7px;height:1px;background:repeating-linear-gradient(90deg,#777 0 1px,transparent 1px 2px)"></div><div class="a" style="left:42px;top:856px;width:1px;height:15px;background:repeating-linear-gradient(180deg,#777 0 1px,transparent 1px 2px)"></div><div class="a" style="left:44px;top:871px;width:7px;height:1px;background:repeating-linear-gradient(90deg,#777 0 1px,transparent 1px 2px)"></div><div class="a" style="left:61px;top:879px;width:1px;height:8px;background:repeating-linear-gradient(180deg,#777 0 1px,transparent 1px 2px)"></div><div class="a" style="left:63px;top:887px;width:10px;height:1px;background:repeating-linear-gradient(90deg,#777 0 1px,transparent 1px 2px)"></div><div class="a" style="left:61px;top:888px;width:1px;height:15px;background:repeating-linear-gradient(180deg,#777 0 1px,transparent 1px 2px)"></div><div class="a" style="left:63px;top:903px;width:10px;height:1px;background:repeating-linear-gradient(90deg,#777 0 1px,transparent 1px 2px)"></div><div class="a" style="left:61px;top:904px;width:1px;height:15px;background:repeating-linear-gradient(180deg,#777 0 1px,transparent 1px 2px)"></div><div class="a" style="left:63px;top:919px;width:10px;height:1px;background:repeating-linear-gradient(90deg,#777 0 1px,transparent 1px 2px)"></div><div class="a" style="left:61px;top:920px;width:1px;height:15px;background:repeating-linear-gradient(180deg,#777 0 1px,transparent 1px 2px)"></div><div class="a" style="left:63px;top:935px;width:10px;height:1px;background:repeating-linear-gradient(90deg,#777 0 1px,transparent 1px 2px)"></div><div class="a" style="left:61px;top:936px;width:1px;height:15px;background:repeating-linear-gradient(180deg,#777 0 1px,transparent 1px 2px)"></div><div class="a" style="left:63px;top:951px;width:10px;height:1px;background:repeating-linear-gradient(90deg,#777 0 1px,transparent 1px 2px)"></div><div class="a" style="left:61px;top:952px;width:1px;height:15px;background:repeating-linear-gradient(180deg,#777 0 1px,transparent 1px 2px)"></div><div class="a" style="left:63px;top:967px;width:10px;height:1px;background:repeating-linear-gradient(90deg,#777 0 1px,transparent 1px 2px)"></div><div class="a" style="left:42px;top:872px;width:1px;height:111px;background:repeating-linear-gradient(180deg,#777 0 1px,transparent 1px 2px)"></div><div class="a" style="left:44px;top:983px;width:7px;height:1px;background:repeating-linear-gradient(90deg,#777 0 1px,transparent 1px 2px)"></div><div class="a" style="left:42px;top:984px;width:1px;height:15px;background:repeating-linear-gradient(180deg,#777 0 1px,transparent 1px 2px)"></div><div class="a" style="left:44px;top:999px;width:7px;height:1px;background:repeating-linear-gradient(90deg,#777 0 1px,transparent 1px 2px)"></div><div class="a" style="left:42px;top:1000px;width:1px;height:15px;background:repeating-linear-gradient(180deg,#777 0 1px,transparent 1px 2px)"></div><div class="a" style="left:44px;top:1015px;width:7px;height:1px;background:repeating-linear-gradient(90deg,#777 0 1px,transparent 1px 2px)"></div><div class="a" style="left:42px;top:1016px;width:1px;height:15px;background:repeating-linear-gradient(180deg,#777 0 1px,transparent 1px 2px)"></div><div class="a" style="left:44px;top:1031px;width:10px;height:1px;background:repeating-linear-gradient(90deg,#777 0 1px,transparent 1px 2px)"></div><div class="a" style="left:19px;top:643px;width:9px;height:9px;border:1px solid #7f9db9;border-radius:1px;background:linear-gradient(#fff,#e4dfd2)"></div><div class="a" style="left:21px;top:647px;width:5px;height:1px;background:#000"></div><svg style="left:38px;top:639px" width="17" height="17" viewBox="0 0 17 17"><use href="#ico-galaxy"/></svg><div class="t" style="left:57px;top:640px;font-size:11px;line-height:16px">ARM_1305</div><div class="a" style="left:38px;top:659px;width:9px;height:9px;border:1px solid #7f9db9;border-radius:1px;background:linear-gradient(#fff,#e4dfd2)"></div><div class="a" style="left:40px;top:663px;width:5px;height:1px;background:#000"></div><div class="a" style="left:42px;top:661px;width:1px;height:5px;background:#000"></div><svg style="left:51px;top:657px" width="6" height="7" viewBox="0 0 6 7"><use href="#badge-lock"/></svg><svg style="left:57px;top:656px" width="16" height="16" viewBox="0 0 16 16"><use href="#ico-sphere"/></svg><div class="t" style="left:76px;top:656px;font-size:11px;line-height:16px">$AnalogDevice</div><div class="a" style="left:38px;top:675px;width:9px;height:9px;border:1px solid #7f9db9;border-radius:1px;background:linear-gradient(#fff,#e4dfd2)"></div><div class="a" style="left:40px;top:679px;width:5px;height:1px;background:#000"></div><div class="a" style="left:42px;top:677px;width:1px;height:5px;background:#000"></div><svg style="left:51px;top:673px" width="6" height="7" viewBox="0 0 6 7"><use href="#badge-lock"/></svg><svg style="left:57px;top:672px" width="16" height="16" viewBox="0 0 16 16"><use href="#ico-gear"/></svg><div class="t" style="left:76px;top:672px;font-size:11px;line-height:16px">$AppEngine</div><div class="a" style="left:38px;top:691px;width:9px;height:9px;border:1px solid #7f9db9;border-radius:1px;background:linear-gradient(#fff,#e4dfd2)"></div><div class="a" style="left:40px;top:695px;width:5px;height:1px;background:#000"></div><div class="a" style="left:42px;top:693px;width:1px;height:5px;background:#000"></div><svg style="left:51px;top:689px" width="6" height="7" viewBox="0 0 6 7"><use href="#badge-lock"/></svg><svg style="left:57px;top:688px" width="16" height="16" viewBox="0 0 16 16"><use href="#ico-area"/></svg><div class="t" style="left:76px;top:688px;font-size:11px;line-height:16px">$Area</div><div class="a" style="left:38px;top:707px;width:9px;height:9px;border:1px solid #7f9db9;border-radius:1px;background:linear-gradient(#fff,#e4dfd2)"></div><div class="a" style="left:40px;top:711px;width:5px;height:1px;background:#000"></div><div class="a" style="left:42px;top:709px;width:1px;height:5px;background:#000"></div><svg style="left:51px;top:705px" width="6" height="7" viewBox="0 0 6 7"><use href="#badge-lock"/></svg><svg style="left:57px;top:704px" width="16" height="16" viewBox="0 0 16 16"><use href="#ico-box"/></svg><div class="t" style="left:76px;top:704px;font-size:11px;line-height:16px">$DDESuiteLinkClient</div><div class="a" style="left:38px;top:723px;width:9px;height:9px;border:1px solid #7f9db9;border-radius:1px;background:linear-gradient(#fff,#e4dfd2)"></div><div class="a" style="left:40px;top:727px;width:5px;height:1px;background:#000"></div><div class="a" style="left:42px;top:725px;width:1px;height:5px;background:#000"></div><svg style="left:51px;top:721px" width="6" height="7" viewBox="0 0 6 7"><use href="#badge-lock"/></svg><svg style="left:57px;top:720px" width="16" height="16" viewBox="0 0 16 16"><use href="#ico-sphere"/></svg><div class="t" style="left:76px;top:720px;font-size:11px;line-height:16px">$DiscreteDevice</div><div class="a" style="left:38px;top:739px;width:9px;height:9px;border:1px solid #7f9db9;border-radius:1px;background:linear-gradient(#fff,#e4dfd2)"></div><div class="a" style="left:40px;top:743px;width:5px;height:1px;background:#000"></div><div class="a" style="left:42px;top:741px;width:1px;height:5px;background:#000"></div><svg style="left:51px;top:737px" width="6" height="7" viewBox="0 0 6 7"><use href="#badge-lock"/></svg><svg style="left:57px;top:736px" width="16" height="16" viewBox="0 0 16 16"><use href="#ico-box"/></svg><div class="t" style="left:76px;top:736px;font-size:11px;line-height:16px">$InTouchProxy</div><div class="a" style="left:38px;top:755px;width:9px;height:9px;border:1px solid #7f9db9;border-radius:1px;background:linear-gradient(#fff,#e4dfd2)"></div><div class="a" style="left:40px;top:759px;width:5px;height:1px;background:#000"></div><svg style="left:51px;top:753px" width="6" height="7" viewBox="0 0 6 7"><use href="#badge-lock"/></svg><svg style="left:57px;top:752px" width="17" height="17" viewBox="0 0 17 17"><use href="#ico-itva"/></svg><div class="t" style="left:76px;top:752px;font-size:11px;line-height:16px">$InTouchViewApp</div><div class="a" style="left:57px;top:771px;width:9px;height:9px;border:1px solid #7f9db9;border-radius:1px;background:linear-gradient(#fff,#e4dfd2)"></div><div class="a" style="left:59px;top:775px;width:5px;height:1px;background:#000"></div><svg style="left:71px;top:769px" width="6" height="6" viewBox="0 0 6 6"><use href="#badge-check"/></svg><svg style="left:76px;top:768px" width="17" height="17" viewBox="0 0 17 17"><use href="#ico-itva"/></svg><div class="t" style="left:95px;top:768px;font-size:11px;line-height:16px">$InTouchViewApp_001</div><svg style="left:95px;top:784px" width="17" height="17" viewBox="0 0 17 17"><use href="#ico-itva"/></svg><div class="a" style="left:112px;top:783px;width:130px;height:18px;background:#f0f0f0;border:1px dotted #999"></div><div class="t" style="left:114px;top:784px;font-size:11px;line-height:16px">InTouchViewApp_1305</div><div class="a" style="left:38px;top:803px;width:9px;height:9px;border:1px solid #7f9db9;border-radius:1px;background:linear-gradient(#fff,#e4dfd2)"></div><div class="a" style="left:40px;top:807px;width:5px;height:1px;background:#000"></div><div class="a" style="left:42px;top:805px;width:1px;height:5px;background:#000"></div><svg style="left:51px;top:801px" width="6" height="7" viewBox="0 0 6 7"><use href="#badge-lock"/></svg><svg style="left:57px;top:800px" width="16" height="16" viewBox="0 0 16 16"><use href="#ico-box"/></svg><div class="t" style="left:76px;top:800px;font-size:11px;line-height:16px">$OPCClient</div><div class="a" style="left:38px;top:819px;width:9px;height:9px;border:1px solid #7f9db9;border-radius:1px;background:linear-gradient(#fff,#e4dfd2)"></div><div class="a" style="left:40px;top:823px;width:5px;height:1px;background:#000"></div><div class="a" style="left:42px;top:821px;width:1px;height:5px;background:#000"></div><svg style="left:51px;top:817px" width="6" height="7" viewBox="0 0 6 7"><use href="#badge-lock"/></svg><svg style="left:57px;top:816px" width="16" height="16" viewBox="0 0 16 16"><use href="#ico-redund"/></svg><div class="t" style="left:76px;top:816px;font-size:11px;line-height:16px">$RedundantDIObject</div><div class="a" style="left:38px;top:835px;width:9px;height:9px;border:1px solid #7f9db9;border-radius:1px;background:linear-gradient(#fff,#e4dfd2)"></div><div class="a" style="left:40px;top:839px;width:5px;height:1px;background:#000"></div><div class="a" style="left:42px;top:837px;width:1px;height:5px;background:#000"></div><svg style="left:51px;top:833px" width="6" height="7" viewBox="0 0 6 7"><use href="#badge-lock"/></svg><svg style="left:57px;top:832px" width="16" height="16" viewBox="0 0 16 16"><use href="#ico-sphere"/></svg><div class="t" style="left:76px;top:832px;font-size:11px;line-height:16px">$Sequencer</div><div class="a" style="left:38px;top:851px;width:9px;height:9px;border:1px solid #7f9db9;border-radius:1px;background:linear-gradient(#fff,#e4dfd2)"></div><div class="a" style="left:40px;top:855px;width:5px;height:1px;background:#000"></div><div class="a" style="left:42px;top:853px;width:1px;height:5px;background:#000"></div><svg style="left:51px;top:849px" width="6" height="7" viewBox="0 0 6 7"><use href="#badge-lock"/></svg><svg style="left:57px;top:848px" width="16" height="16" viewBox="0 0 16 16"><use href="#ico-sphere"/></svg><div class="t" style="left:76px;top:848px;font-size:11px;line-height:16px">$SQLData</div><div class="a" style="left:38px;top:867px;width:9px;height:9px;border:1px solid #7f9db9;border-radius:1px;background:linear-gradient(#fff,#e4dfd2)"></div><div class="a" style="left:40px;top:871px;width:5px;height:1px;background:#000"></div><svg style="left:51px;top:865px" width="6" height="7" viewBox="0 0 6 7"><use href="#badge-lock"/></svg><svg style="left:57px;top:864px" width="16" height="16" viewBox="0 0 16 16"><use href="#ico-sphere"/></svg><div class="t" style="left:76px;top:864px;font-size:11px;line-height:16px">$UserDefined</div><div class="a" style="left:57px;top:883px;width:9px;height:9px;border:1px solid #7f9db9;border-radius:1px;background:linear-gradient(#fff,#e4dfd2)"></div><div class="a" style="left:59px;top:887px;width:5px;height:1px;background:#000"></div><div class="a" style="left:61px;top:885px;width:1px;height:5px;background:#000"></div><svg style="left:76px;top:880px" width="16" height="16" viewBox="0 0 16 16"><use href="#ico-sphere"/></svg><div class="t" style="left:95px;top:880px;font-size:11px;line-height:16px">$Ainput</div><div class="a" style="left:57px;top:899px;width:9px;height:9px;border:1px solid #7f9db9;border-radius:1px;background:linear-gradient(#fff,#e4dfd2)"></div><div class="a" style="left:59px;top:903px;width:5px;height:1px;background:#000"></div><div class="a" style="left:61px;top:901px;width:1px;height:5px;background:#000"></div><svg style="left:76px;top:896px" width="16" height="16" viewBox="0 0 16 16"><use href="#ico-sphere"/></svg><div class="t" style="left:95px;top:896px;font-size:11px;line-height:16px">$LogIN</div><div class="a" style="left:57px;top:915px;width:9px;height:9px;border:1px solid #7f9db9;border-radius:1px;background:linear-gradient(#fff,#e4dfd2)"></div><div class="a" style="left:59px;top:919px;width:5px;height:1px;background:#000"></div><div class="a" style="left:61px;top:917px;width:1px;height:5px;background:#000"></div><svg style="left:76px;top:912px" width="16" height="16" viewBox="0 0 16 16"><use href="#ico-sphere"/></svg><div class="t" style="left:95px;top:912px;font-size:11px;line-height:16px">$Pump</div><svg style="left:76px;top:928px" width="16" height="16" viewBox="0 0 16 16"><use href="#ico-sphere"/></svg><div class="t" style="left:95px;top:928px;font-size:11px;line-height:16px">$Pump.Master_UserDefined</div><div class="a" style="left:57px;top:947px;width:9px;height:9px;border:1px solid #7f9db9;border-radius:1px;background:linear-gradient(#fff,#e4dfd2)"></div><div class="a" style="left:59px;top:951px;width:5px;height:1px;background:#000"></div><div class="a" style="left:61px;top:949px;width:1px;height:5px;background:#000"></div><svg style="left:76px;top:944px" width="16" height="16" viewBox="0 0 16 16"><use href="#ico-sphere"/></svg><div class="t" style="left:95px;top:944px;font-size:11px;line-height:16px">$Valve_AI</div><div class="a" style="left:57px;top:963px;width:9px;height:9px;border:1px solid #7f9db9;border-radius:1px;background:linear-gradient(#fff,#e4dfd2)"></div><div class="a" style="left:59px;top:967px;width:5px;height:1px;background:#000"></div><div class="a" style="left:61px;top:965px;width:1px;height:5px;background:#000"></div><svg style="left:76px;top:960px" width="16" height="16" viewBox="0 0 16 16"><use href="#ico-sphere"/></svg><div class="t" style="left:95px;top:960px;font-size:11px;line-height:16px">$Valve_DI</div><div class="a" style="left:38px;top:979px;width:9px;height:9px;border:1px solid #7f9db9;border-radius:1px;background:linear-gradient(#fff,#e4dfd2)"></div><div class="a" style="left:40px;top:983px;width:5px;height:1px;background:#000"></div><div class="a" style="left:42px;top:981px;width:1px;height:5px;background:#000"></div><svg style="left:51px;top:977px" width="6" height="7" viewBox="0 0 6 7"><use href="#badge-lock"/></svg><svg style="left:57px;top:976px" width="16" height="16" viewBox="0 0 16 16"><use href="#ico-viewapp"/></svg><div class="t" style="left:76px;top:976px;font-size:11px;line-height:16px">$ViewApp</div><div class="a" style="left:38px;top:995px;width:9px;height:9px;border:1px solid #7f9db9;border-radius:1px;background:linear-gradient(#fff,#e4dfd2)"></div><div class="a" style="left:40px;top:999px;width:5px;height:1px;background:#000"></div><div class="a" style="left:42px;top:997px;width:1px;height:5px;background:#000"></div><svg style="left:51px;top:993px" width="6" height="7" viewBox="0 0 6 7"><use href="#badge-lock"/></svg><svg style="left:57px;top:992px" width="16" height="16" viewBox="0 0 16 16"><use href="#ico-viewengine"/></svg><div class="t" style="left:76px;top:992px;font-size:11px;line-height:16px">$ViewEngine</div><div class="a" style="left:38px;top:1011px;width:9px;height:9px;border:1px solid #7f9db9;border-radius:1px;background:linear-gradient(#fff,#e4dfd2)"></div><div class="a" style="left:40px;top:1015px;width:5px;height:1px;background:#000"></div><div class="a" style="left:42px;top:1013px;width:1px;height:5px;background:#000"></div><svg style="left:51px;top:1009px" width="6" height="7" viewBox="0 0 6 7"><use href="#badge-lock"/></svg><svg style="left:57px;top:1008px" width="16" height="16" viewBox="0 0 16 16"><use href="#ico-winplat"/></svg><div class="t" style="left:76px;top:1008px;font-size:11px;line-height:16px">$WinPlatform</div><div class="a" style="left:38px;top:1027px;width:9px;height:9px;border:1px solid #7f9db9;border-radius:1px;background:linear-gradient(#fff,#e4dfd2)"></div><div class="a" style="left:40px;top:1031px;width:5px;height:1px;background:#000"></div><div class="a" style="left:42px;top:1029px;width:1px;height:5px;background:#000"></div><svg style="left:57px;top:1023px" width="16" height="16" viewBox="0 0 16 16"><use href="#ico-folder"/></svg><div class="t" style="left:76px;top:1024px;font-size:11px;line-height:16px">Unused Base Templates</div><div class="a" style="left:0px;top:1120px;width:398px;height:20px;background:#fdfdfd"></div><div class="a" style="left:0px;top:1120px;width:146px;height:1px;background:#6e6e6e"></div><div class="a" style="left:222px;top:1120px;width:176px;height:1px;background:#6e6e6e"></div><div class="a" style="left:3px;top:1121px;width:143px;height:19px;background:#f2f2f2"></div><div class="a" style="left:59px;top:1123px;width:1px;height:15px;background:#0078d7"></div><div class="a" style="left:146px;top:1121px;width:76px;height:19px;background:linear-gradient(#f4f4f4,#fafafa);border-right:1px solid #222;border-bottom:1px solid #222"></div><svg style="left:5px;top:1123px" width="16" height="16" viewBox="0 0 16 16"><use href="#ico-model"/></svg><div class="t" style="left:24px;top:1123px;font-size:11px;line-height:16px"><u>M</u>odel</div><svg style="left:61px;top:1123px" width="16" height="16" viewBox="0 0 16 16"><use href="#ico-deploy"/></svg><div class="t" style="left:80px;top:1123px;font-size:11px;line-height:16px"><u>D</u>eployment</div><svg style="left:147px;top:1123px" width="16" height="16" viewBox="0 0 16 16"><use href="#ico-deriv"/></svg><div class="t" style="left:166px;top:1123px;font-size:11px;line-height:16px">De<u>r</u>ivation</div><div class="a" style="left:398px;top:75px;width:1px;height:1065px;background:#0078d7"></div><div class="a" style="left:399px;top:75px;width:3px;height:1065px;background:#fff"></div><div class="a" style="left:402px;top:75px;width:1px;height:1065px;background:#0078d7"></div><svg style="left:1580px;top:1086px" width="60" height="48" viewBox="0 0 60 48"><g fill="none" stroke="#6c6b76" stroke-width="2.3" stroke-linecap="round" style="filter:drop-shadow(0 0 1px rgba(40,40,60,0.5))"><circle cx="16" cy="15.5" r="3.2"/><circle cx="46" cy="10" r="3.2"/><circle cx="29.5" cy="21.5" r="11" fill="#ababab"/><path d="M12.5 23.5C6 28 3 34 6.5 36.5C9.5 38.5 14 37.8 16.5 37.2"/><path d="M25 32.5L42 24C48.5 20 51.5 15 49 11.5"/><path d="M28 36L41 29.5C46 27 49 23.5 50 20"/><circle cx="20.5" cy="35.5" r="4.8" fill="#ababab"/></g></svg><div class="t" style="left:1646px;top:1084px;font-size:44px;line-height:52px;color:#6f6e79;-webkit-text-stroke:1.1px #6f6e79;transform:scaleX(0.703);transform-origin:0 0;text-shadow:0 0 1px rgba(40,40,60,0.45)">IDE 2017 Update 3</div><div class="a" style="left:603px;top:328px;width:741px;height:493px;background:#f0f0f0;border:1px solid #1883d7;box-shadow:1px 3px 14px 1px rgba(0,0,0,0.3)"></div><div class="a" style="left:604px;top:329px;width:738px;height:30px;background:#fff"></div><div class="t" style="left:612px;top:336px;font-size:12px;line-height:16px;transform:scaleX(0.99);transform-origin:0 0;">Alarms and Events Configuration</div><svg style="left:1323px;top:338px" width="11" height="11" viewBox="0 0 11 11"><path d="M0.5 0.5l10 10M10.5 0.5l-10 10" stroke="#111" stroke-width="1.1"/></svg><div class="t" style="left:621px;top:367px;font-size:12px;line-height:16px;transform:scaleX(0.88);transform-origin:0 0;">Alarms:</div><div class="a" style="left:616px;top:384px;width:714px;height:108px;background:#fff;border:1px solid #a0a0a0"></div><div class="a" style="left:616px;top:403px;width:713px;height:1px;background:#a0a0a0"></div><div class="a" style="left:616px;top:425px;width:713px;height:1px;background:#a0a0a0"></div><div class="a" style="left:616px;top:447px;width:713px;height:1px;background:#a0a0a0"></div><div class="a" style="left:616px;top:469px;width:713px;height:1px;background:#a0a0a0"></div><div class="a" style="left:695px;top:385px;width:1px;height:18px;background:#e5e5e5"></div><div class="a" style="left:695px;top:403px;width:1px;height:88px;background:#a0a0a0"></div><div class="a" style="left:773px;top:385px;width:1px;height:18px;background:#e5e5e5"></div><div class="a" style="left:773px;top:403px;width:1px;height:88px;background:#a0a0a0"></div><div class="a" style="left:839px;top:385px;width:1px;height:18px;background:#e5e5e5"></div><div class="a" style="left:839px;top:403px;width:1px;height:88px;background:#a0a0a0"></div><div class="a" style="left:941px;top:385px;width:1px;height:18px;background:#e5e5e5"></div><div class="a" style="left:941px;top:403px;width:1px;height:88px;background:#a0a0a0"></div><div class="a" style="left:1076px;top:385px;width:1px;height:18px;background:#e5e5e5"></div><div class="a" style="left:1076px;top:403px;width:1px;height:88px;background:#a0a0a0"></div><div class="a" style="left:1211px;top:385px;width:1px;height:18px;background:#e5e5e5"></div><div class="a" style="left:1211px;top:403px;width:1px;height:88px;background:#a0a0a0"></div><div class="a" style="left:619px;top:384px;width:43px;height:1px;background:#f0f0f0"></div><div class="t" style="left:624px;top:386px;font-size:12px;line-height:16px;transform:scaleX(0.88);transform-origin:0 0;">Severity</div><div class="t" style="left:703px;top:386px;font-size:12px;line-height:16px;transform:scaleX(0.88);transform-origin:0 0;">Description</div><div class="t" style="left:781px;top:386px;font-size:12px;line-height:16px;transform:scaleX(0.88);transform-origin:0 0;">Shelve</div><div class="t" style="left:847px;top:386px;font-size:12px;line-height:16px;transform:scaleX(0.88);transform-origin:0 0;">Historize</div><div class="t" style="left:949px;top:386px;font-size:12px;line-height:16px;transform:scaleX(0.88);transform-origin:0 0;">From Priority Range</div><div class="t" style="left:1084px;top:386px;font-size:12px;line-height:16px;transform:scaleX(0.88);transform-origin:0 0;">To Priority Range</div><div class="t" style="left:1219px;top:386px;font-size:12px;line-height:16px;transform:scaleX(0.88);transform-origin:0 0;">Image</div><div class="t" style="left:616px;width:79px;top:407px;font-size:12px;line-height:16px;text-align:center;transform:scaleX(0.88);">1</div><div class="t" style="left:698px;top:407px;font-size:12px;line-height:16px;transform:scaleX(0.88);transform-origin:0 0;">Critical</div><svg style="left:800px;top:408px" width="13" height="13" viewBox="0 0 13 13"><rect x="0.5" y="0.5" width="12" height="12" fill="#fff" stroke="#333"/></svg><div class="a" style="left:840px;top:404px;width:101px;height:21px;background:#0078d7"></div><svg style="left:884px;top:408px" width="13" height="13" viewBox="0 0 13 13"><rect x="0.5" y="0.5" width="12" height="12" fill="#fff" stroke="#333"/></svg><div class="t" style="left:941px;width:135px;top:407px;font-size:12px;line-height:16px;text-align:center;transform:scaleX(0.88);">1</div><div class="t" style="left:1076px;width:135px;top:407px;font-size:12px;line-height:16px;text-align:center;transform:scaleX(0.88);">250</div><svg style="left:1222px;top:407px" width="18" height="18" viewBox="0 0 18 18"><path d="M9 0.5L17.5 9L9 17.5L0.5 9z" fill="#f00"/><text x="9" y="13" font-family="Liberation Sans" font-weight="bold" font-size="10" fill="#fff" text-anchor="middle">1</text></svg><div class="a" style="left:1285px;top:406px;width:23px;height:18px;background:#e1e1e1;border:1px solid #adadad"></div><div class="t" style="left:1285px;width:23px;top:409px;font-size:12px;line-height:14px;text-align:center;letter-spacing:-0.5px">...</div><div class="t" style="left:616px;width:79px;top:429px;font-size:12px;line-height:16px;text-align:center;transform:scaleX(0.88);">2</div><div class="t" style="left:698px;top:429px;font-size:12px;line-height:16px;transform:scaleX(0.88);transform-origin:0 0;">High</div><svg style="left:800px;top:430px" width="13" height="13" viewBox="0 0 13 13"><rect x="0.5" y="0.5" width="12" height="12" fill="#fff" stroke="#333"/></svg><svg style="left:884px;top:430px" width="13" height="13" viewBox="0 0 13 13"><rect x="0.5" y="0.5" width="12" height="12" fill="#fff" stroke="#333"/></svg><div class="t" style="left:941px;width:135px;top:429px;font-size:12px;line-height:16px;text-align:center;transform:scaleX(0.88);color:#a0a0a0">251</div><div class="t" style="left:1076px;width:135px;top:429px;font-size:12px;line-height:16px;text-align:center;transform:scaleX(0.88);">500</div><svg style="left:1222px;top:429px" width="18" height="18" viewBox="0 0 18 18"><rect x="0" y="0" width="18" height="17.5" fill="#ff0"/><text x="9" y="13.5" font-family="Liberation Sans" font-weight="bold" font-size="10" fill="#000" text-anchor="middle">2</text></svg><div class="a" style="left:1285px;top:428px;width:23px;height:18px;background:#e1e1e1;border:1px solid #adadad"></div><div class="t" style="left:1285px;width:23px;top:431px;font-size:12px;line-height:14px;text-align:center;letter-spacing:-0.5px">...</div><div class="t" style="left:616px;width:79px;top:451px;font-size:12px;line-height:16px;text-align:center;transform:scaleX(0.88);">3</div><div class="t" style="left:698px;top:451px;font-size:12px;line-height:16px;transform:scaleX(0.88);transform-origin:0 0;">Medium</div><svg style="left:800px;top:452px" width="13" height="13" viewBox="0 0 13 13"><rect x="0.5" y="0.5" width="12" height="12" fill="#fff" stroke="#333"/><path d="M2.5 6.5l2.6 2.8L10.5 3.5" fill="none" stroke="#333" stroke-width="1.3"/></svg><svg style="left:884px;top:452px" width="13" height="13" viewBox="0 0 13 13"><rect x="0.5" y="0.5" width="12" height="12" fill="#fff" stroke="#333"/></svg><div class="t" style="left:941px;width:135px;top:451px;font-size:12px;line-height:16px;text-align:center;transform:scaleX(0.88);color:#a0a0a0">501</div><div class="t" style="left:1076px;width:135px;top:451px;font-size:12px;line-height:16px;text-align:center;transform:scaleX(0.88);">750</div><svg style="left:1222px;top:451px" width="18" height="18" viewBox="0 0 18 18"><path d="M0 0.5H18L9 16z" fill="#0ff"/><text x="9" y="8.5" font-family="Liberation Sans" font-weight="bold" font-size="9" fill="#000" text-anchor="middle">3</text></svg><div class="a" style="left:1285px;top:450px;width:23px;height:18px;background:#e1e1e1;border:1px solid #adadad"></div><div class="t" style="left:1285px;width:23px;top:453px;font-size:12px;line-height:14px;text-align:center;letter-spacing:-0.5px">...</div><div class="t" style="left:616px;width:79px;top:473px;font-size:12px;line-height:16px;text-align:center;transform:scaleX(0.88);">4</div><div class="t" style="left:698px;top:473px;font-size:12px;line-height:16px;transform:scaleX(0.88);transform-origin:0 0;">Low</div><svg style="left:800px;top:474px" width="13" height="13" viewBox="0 0 13 13"><rect x="0.5" y="0.5" width="12" height="12" fill="#fff" stroke="#333"/><path d="M2.5 6.5l2.6 2.8L10.5 3.5" fill="none" stroke="#333" stroke-width="1.3"/></svg><svg style="left:884px;top:474px" width="13" height="13" viewBox="0 0 13 13"><rect x="0.5" y="0.5" width="12" height="12" fill="#fff" stroke="#333"/></svg><div class="t" style="left:941px;width:135px;top:473px;font-size:12px;line-height:16px;text-align:center;transform:scaleX(0.88);color:#a0a0a0">751</div><div class="t" style="left:1076px;width:135px;top:473px;font-size:12px;line-height:16px;text-align:center;transform:scaleX(0.88);">999</div><svg style="left:1222px;top:473px" width="18" height="18" viewBox="0 0 18 18"><path d="M9 1L18 17H0z" fill="#f0f"/><text x="9" y="15.5" font-family="Liberation Sans" font-weight="bold" font-size="9" fill="#fff" text-anchor="middle">4</text></svg><div class="a" style="left:1285px;top:472px;width:23px;height:18px;background:#e1e1e1;border:1px solid #adadad"></div><div class="t" style="left:1285px;width:23px;top:475px;font-size:12px;line-height:14px;text-align:center;letter-spacing:-0.5px">...</div><div class="t" style="left:621px;top:506px;font-size:12px;line-height:16px;transform:scaleX(0.88);transform-origin:0 0;">Modes:</div><div class="a" style="left:616px;top:524px;width:350px;height:86px;background:#fff;border:1px solid #a0a0a0"></div><div class="a" style="left:616px;top:543px;width:349px;height:1px;background:#a0a0a0"></div><div class="a" style="left:616px;top:565px;width:349px;height:1px;background:#a0a0a0"></div><div class="a" style="left:616px;top:587px;width:349px;height:1px;background:#a0a0a0"></div><div class="a" style="left:836px;top:525px;width:1px;height:18px;background:#e5e5e5"></div><div class="a" style="left:836px;top:543px;width:1px;height:66px;background:#a0a0a0"></div><div class="t" style="left:624px;top:526px;font-size:12px;line-height:16px;transform:scaleX(0.88);transform-origin:0 0;">Description</div><div class="t" style="left:844px;top:526px;font-size:12px;line-height:16px;transform:scaleX(0.88);transform-origin:0 0;">Image</div><div class="a" style="left:617px;top:544px;width:219px;height:21px;background:#0078d7"></div><div class="t" style="left:620px;top:547px;font-size:12px;line-height:16px;transform:scaleX(0.88);transform-origin:0 0;color:#fff">Inhibited/Disabled</div><div class="a" style="left:910px;top:545px;width:34px;height:19px;background:#e1e1e1;border:1px solid #adadad"></div><div class="t" style="left:915px;width:34px;top:549px;font-size:12px;line-height:14px;text-align:center;letter-spacing:-0.5px">...</div><div class="t" style="left:620px;top:569px;font-size:12px;line-height:16px;transform:scaleX(0.88);transform-origin:0 0;">Silenced</div><div class="a" style="left:910px;top:567px;width:34px;height:19px;background:#e1e1e1;border:1px solid #adadad"></div><div class="t" style="left:915px;width:34px;top:571px;font-size:12px;line-height:14px;text-align:center;letter-spacing:-0.5px">...</div><div class="t" style="left:620px;top:591px;font-size:12px;line-height:16px;transform:scaleX(0.88);transform-origin:0 0;">Shelved</div><div class="a" style="left:910px;top:589px;width:34px;height:19px;background:#e1e1e1;border:1px solid #adadad"></div><div class="t" style="left:915px;width:34px;top:593px;font-size:12px;line-height:14px;text-align:center;letter-spacing:-0.5px">...</div><svg style="left:847px;top:545px" width="18" height="18" viewBox="0 0 18 18"><path d="M6 1h6l5 5v6l-5 5H6l-5-5V6z" fill="#fff" stroke="#222" stroke-width="1.2"/><path d="M6.2 6.2l5.6 5.6M11.8 6.2l-5.6 5.6" stroke="#111" stroke-width="2.2"/></svg><svg style="left:847px;top:567px" width="18" height="18" viewBox="0 0 18 18"><circle cx="9" cy="9" r="8" fill="#fff" stroke="#222" stroke-width="1.2"/><path d="M4.5 9L11 4.5V13.5z" fill="#111"/><rect x="10" y="7" width="2.5" height="4" fill="#111"/><path d="M6 12L12 6" stroke="#fff" stroke-width="0.7"/></svg><svg style="left:847px;top:589px" width="18" height="18" viewBox="0 0 18 18"><circle cx="9" cy="9" r="8" fill="#fff" stroke="#222" stroke-width="1.2"/><path d="M9 9V1A8 8 0 0 1 17 9z" fill="#111"/></svg><div class="t" style="left:981px;top:506px;font-size:12px;line-height:16px;transform:scaleX(0.88);transform-origin:0 0;">Events:</div><div class="a" style="left:981px;top:524px;width:349px;height:86px;background:#fff;border:1px solid #a0a0a0"></div><div class="a" style="left:981px;top:543px;width:348px;height:1px;background:#a0a0a0"></div><div class="a" style="left:981px;top:565px;width:348px;height:1px;background:#a0a0a0"></div><div class="a" style="left:981px;top:587px;width:348px;height:1px;background:#a0a0a0"></div><div class="a" style="left:1076px;top:525px;width:1px;height:18px;background:#e5e5e5"></div><div class="a" style="left:1076px;top:543px;width:1px;height:66px;background:#a0a0a0"></div><div class="a" style="left:1205px;top:525px;width:1px;height:18px;background:#e5e5e5"></div><div class="a" style="left:1205px;top:543px;width:1px;height:66px;background:#a0a0a0"></div><div class="a" style="left:1077px;top:525px;width:128px;height:18px;background:#d9ebf9"></div><div class="t" style="left:989px;top:526px;font-size:12px;line-height:16px;transform:scaleX(0.88);transform-origin:0 0;">Types</div><div class="t" style="left:1084px;top:526px;font-size:12px;line-height:16px;transform:scaleX(0.88);transform-origin:0 0;">Description</div><div class="t" style="left:1213px;top:526px;font-size:12px;line-height:16px;transform:scaleX(0.88);transform-origin:0 0;">Historize</div><div class="a" style="left:982px;top:544px;width:94px;height:21px;background:#0078d7"></div><div class="t" style="left:981px;width:95px;top:547px;font-size:12px;line-height:16px;text-align:center;transform:scaleX(0.88);color:#fff">1</div><div class="t" style="left:1080px;top:547px;font-size:12px;line-height:16px;transform:scaleX(0.88);transform-origin:0 0;">System</div><svg style="left:1261px;top:548px" width="13" height="13" viewBox="0 0 13 13"><rect x="0.5" y="0.5" width="12" height="12" fill="#fff" stroke="#333"/><path d="M2.5 6.5l2.6 2.8L10.5 3.5" fill="none" stroke="#333" stroke-width="1.3"/></svg><div class="t" style="left:981px;width:95px;top:569px;font-size:12px;line-height:16px;text-align:center;transform:scaleX(0.88);">2</div><div class="t" style="left:1080px;top:569px;font-size:12px;line-height:16px;transform:scaleX(0.88);transform-origin:0 0;">Application</div><svg style="left:1261px;top:570px" width="13" height="13" viewBox="0 0 13 13"><rect x="0.5" y="0.5" width="12" height="12" fill="#fff" stroke="#333"/><path d="M2.5 6.5l2.6 2.8L10.5 3.5" fill="none" stroke="#333" stroke-width="1.3"/></svg><div class="t" style="left:981px;width:95px;top:591px;font-size:12px;line-height:16px;text-align:center;transform:scaleX(0.88);">3</div><div class="t" style="left:1080px;top:591px;font-size:12px;line-height:16px;transform:scaleX(0.88);transform-origin:0 0;">User</div><svg style="left:1261px;top:592px" width="13" height="13" viewBox="0 0 13 13"><rect x="0.5" y="0.5" width="12" height="12" fill="#fff" stroke="#333"/><path d="M2.5 6.5l2.6 2.8L10.5 3.5" fill="none" stroke="#333" stroke-width="1.3"/></svg><div class="t" style="left:621px;top:635px;font-size:12px;line-height:16px;transform:scaleX(0.88);transform-origin:0 0;">Alarm Plant State:</div><div class="a" style="left:902px;top:634px;width:28px;height:16px;border:1px solid #adadad"></div><svg style="left:910px;top:637px" width="11" height="11" viewBox="0 0 11 11"><path d="M5.5 0.5v10M0.5 5.5h10" stroke="#0000e0" stroke-width="2"/></svg><div class="a" style="left:934px;top:634px;width:28px;height:16px;border:1px solid #adadad"></div><svg style="left:942px;top:637px" width="11" height="11" viewBox="0 0 11 11"><path d="M1 1l9 9M10 1l-9 9" stroke="#8a8a8a" stroke-width="1.3"/></svg><div class="a" style="left:616px;top:655px;width:346px;height:130px;background:#fff;border:1px solid #a0a0a0"></div><div class="a" style="left:616px;top:674px;width:345px;height:1px;background:#a0a0a0"></div><div class="a" style="left:616px;top:696px;width:345px;height:1px;background:#a0a0a0"></div><div class="a" style="left:616px;top:718px;width:345px;height:1px;background:#a0a0a0"></div><div class="a" style="left:616px;top:740px;width:345px;height:1px;background:#a0a0a0"></div><div class="a" style="left:616px;top:762px;width:345px;height:1px;background:#a0a0a0"></div><div class="a" style="left:823px;top:656px;width:1px;height:18px;background:#e5e5e5"></div><div class="a" style="left:823px;top:674px;width:1px;height:110px;background:#a0a0a0"></div><div class="t" style="left:624px;top:657px;font-size:12px;line-height:16px;transform:scaleX(0.88);transform-origin:0 0;">Description</div><div class="t" style="left:831px;top:657px;font-size:12px;line-height:16px;transform:scaleX(0.88);transform-origin:0 0;">AlarmMode</div><div class="a" style="left:617px;top:675px;width:206px;height:21px;background:#0078d7"></div><div class="t" style="left:620px;top:678px;font-size:12px;line-height:16px;transform:scaleX(0.88);transform-origin:0 0;color:#fff">Running</div><div class="a" style="left:824px;top:675px;width:137px;height:21px;background:#e1e1e1;border:2px solid #a6a6a6"></div><div class="a" style="left:944px;top:676px;width:1px;height:19px;background:#a6a6a6"></div><div class="t" style="left:827px;top:678px;font-size:12px;line-height:16px;transform:scaleX(0.88);transform-origin:0 0;">Enable</div><svg style="left:948px;top:683px" width="9" height="6" viewBox="0 0 9 6"><path d="M0.5 0.5l4 4 4-4" fill="none" stroke="#333" stroke-width="1"/></svg><div class="t" style="left:620px;top:700px;font-size:12px;line-height:16px;transform:scaleX(0.88);transform-origin:0 0;">Maintenance</div><div class="a" style="left:824px;top:697px;width:137px;height:21px;background:#e1e1e1;border:2px solid #a6a6a6"></div><div class="a" style="left:944px;top:698px;width:1px;height:19px;background:#a6a6a6"></div><div class="t" style="left:827px;top:700px;font-size:12px;line-height:16px;transform:scaleX(0.88);transform-origin:0 0;">Disable</div><svg style="left:948px;top:705px" width="9" height="6" viewBox="0 0 9 6"><path d="M0.5 0.5l4 4 4-4" fill="none" stroke="#333" stroke-width="1"/></svg><div class="t" style="left:620px;top:722px;font-size:12px;line-height:16px;transform:scaleX(0.88);transform-origin:0 0;">Startup</div><div class="a" style="left:824px;top:719px;width:137px;height:21px;background:#e1e1e1;border:2px solid #a6a6a6"></div><div class="a" style="left:944px;top:720px;width:1px;height:19px;background:#a6a6a6"></div><div class="t" style="left:827px;top:722px;font-size:12px;line-height:16px;transform:scaleX(0.88);transform-origin:0 0;">Silence</div><svg style="left:948px;top:727px" width="9" height="6" viewBox="0 0 9 6"><path d="M0.5 0.5l4 4 4-4" fill="none" stroke="#333" stroke-width="1"/></svg><div class="t" style="left:620px;top:744px;font-size:12px;line-height:16px;transform:scaleX(0.88);transform-origin:0 0;">Shutdown</div><div class="a" style="left:824px;top:741px;width:137px;height:21px;background:#e1e1e1;border:2px solid #a6a6a6"></div><div class="a" style="left:944px;top:742px;width:1px;height:19px;background:#a6a6a6"></div><div class="t" style="left:827px;top:744px;font-size:12px;line-height:16px;transform:scaleX(0.88);transform-origin:0 0;">Disable</div><svg style="left:948px;top:749px" width="9" height="6" viewBox="0 0 9 6"><path d="M0.5 0.5l4 4 4-4" fill="none" stroke="#333" stroke-width="1"/></svg><div class="t" style="left:620px;top:766px;font-size:12px;line-height:16px;transform:scaleX(0.88);transform-origin:0 0;">Testing</div><div class="a" style="left:824px;top:763px;width:137px;height:21px;background:#e1e1e1;border:2px solid #a6a6a6"></div><div class="a" style="left:944px;top:764px;width:1px;height:19px;background:#a6a6a6"></div><div class="t" style="left:827px;top:766px;font-size:12px;line-height:16px;transform:scaleX(0.88);transform-origin:0 0;">Silence</div><svg style="left:948px;top:771px" width="9" height="6" viewBox="0 0 9 6"><path d="M0.5 0.5l4 4 4-4" fill="none" stroke="#333" stroke-width="1"/></svg><div class="a" style="left:981px;top:642px;width:349px;height:144px;border:1px solid #dcdcdc"></div><div class="a" style="left:987px;top:640px;width:111px;height:5px;background:#f0f0f0"></div><div class="t" style="left:990px;top:635px;font-size:12px;line-height:16px;transform:scaleX(0.88);transform-origin:0 0;">Alarm Adorner Options</div><div class="a" style="left:987px;top:665px;width:150px;height:107px;border:1px solid #dcdcdc"></div><div class="a" style="left:993px;top:663px;width:101px;height:5px;background:#f0f0f0"></div><div class="t" style="left:996px;top:658px;font-size:12px;line-height:16px;transform:scaleX(0.88);transform-origin:0 0;">Severities to Display</div><div class="a" style="left:1157px;top:665px;width:167px;height:107px;border:1px solid #dcdcdc"></div><div class="a" style="left:1163px;top:663px;width:114px;height:5px;background:#f0f0f0"></div><div class="t" style="left:1166px;top:658px;font-size:12px;line-height:16px;transform:scaleX(0.88);transform-origin:0 0;">Alarm States to Display</div><svg style="left:993px;top:680px" width="13" height="13" viewBox="0 0 13 13"><rect x="0.5" y="0.5" width="12" height="12" fill="#fff" stroke="#333"/><path d="M2.5 6.5l2.6 2.8L10.5 3.5" fill="none" stroke="#333" stroke-width="1.3"/></svg><div class="t" style="left:1010px;top:678px;font-size:12px;line-height:16px;transform:scaleX(0.88);transform-origin:0 0;">Critical</div><svg style="left:993px;top:703px" width="13" height="13" viewBox="0 0 13 13"><rect x="0.5" y="0.5" width="12" height="12" fill="#fff" stroke="#333"/><path d="M2.5 6.5l2.6 2.8L10.5 3.5" fill="none" stroke="#333" stroke-width="1.3"/></svg><div class="t" style="left:1010px;top:701px;font-size:12px;line-height:16px;transform:scaleX(0.88);transform-origin:0 0;">High</div><svg style="left:993px;top:726px" width="13" height="13" viewBox="0 0 13 13"><rect x="0.5" y="0.5" width="12" height="12" fill="#fff" stroke="#333"/><path d="M2.5 6.5l2.6 2.8L10.5 3.5" fill="none" stroke="#333" stroke-width="1.3"/></svg><div class="t" style="left:1010px;top:724px;font-size:12px;line-height:16px;transform:scaleX(0.88);transform-origin:0 0;">Medium</div><svg style="left:993px;top:749px" width="13" height="13" viewBox="0 0 13 13"><rect x="0.5" y="0.5" width="12" height="12" fill="#fff" stroke="#333"/><path d="M2.5 6.5l2.6 2.8L10.5 3.5" fill="none" stroke="#333" stroke-width="1.3"/></svg><div class="t" style="left:1010px;top:747px;font-size:12px;line-height:16px;transform:scaleX(0.88);transform-origin:0 0;">Low</div><div class="a" style="left:1322px;top:677px;width:3px;height:20px;background:#f0f0f0"></div><svg style="left:1163px;top:680px" width="13" height="13" viewBox="0 0 13 13"><rect x="0.5" y="0.5" width="12" height="12" fill="#fff" stroke="#333"/><path d="M2.5 6.5l2.6 2.8L10.5 3.5" fill="none" stroke="#333" stroke-width="1.3"/></svg><div class="t" style="left:1180px;top:678px;font-size:12px;line-height:16px;transform:scaleX(0.88);transform-origin:0 0;">UNACK (Un-Acknowledged)</div><svg style="left:1163px;top:703px" width="13" height="13" viewBox="0 0 13 13"><rect x="0.5" y="0.5" width="12" height="12" fill="#fff" stroke="#333"/><path d="M2.5 6.5l2.6 2.8L10.5 3.5" fill="none" stroke="#333" stroke-width="1.3"/></svg><div class="t" style="left:1180px;top:701px;font-size:12px;line-height:16px;transform:scaleX(0.88);transform-origin:0 0;">ACK (Acknowledged)</div><svg style="left:1163px;top:726px" width="13" height="13" viewBox="0 0 13 13"><rect x="0.5" y="0.5" width="12" height="12" fill="#fff" stroke="#333"/><path d="M2.5 6.5l2.6 2.8L10.5 3.5" fill="none" stroke="#333" stroke-width="1.3"/></svg><div class="t" style="left:1180px;top:724px;font-size:12px;line-height:16px;transform:scaleX(0.88);transform-origin:0 0;">RTN (Return to Normal)</div><div class="a" style="left:1158px;top:797px;width:73px;height:21px;background:#e1e1e1;border:1px solid #adadad"></div><div class="t" style="left:1158px;width:73px;top:799px;font-size:12px;line-height:16px;text-align:center;transform:scaleX(0.88);">OK</div><div class="a" style="left:1256px;top:797px;width:73px;height:21px;background:#e1e1e1;border:1px solid #adadad"></div><div class="t" style="left:1256px;width:73px;top:799px;font-size:12px;line-height:16px;text-align:center;transform:scaleX(0.88);">Cancel</div><svg style="left:1333px;top:810px" width="8" height="8" viewBox="0 0 8 8"><g fill="#b8b8b8"><rect x="6" y="0" width="2" height="2"/><rect x="3" y="3" width="2" height="2"/><rect x="6" y="3" width="2" height="2"/><rect x="0" y="6" width="2" height="2"/><rect x="3" y="6" width="2" height="2"/><rect x="6" y="6" width="2" height="2"/></g></svg><div class="a" style="left:0px;top:1140px;width:1915px;height:1px;background:#acacac"></div><div class="a" style="left:0px;top:1141px;width:1915px;height:19px;background:linear-gradient(#fcfcfc,#f0f0f0)"></div><div class="a" style="left:0px;top:1141px;width:1px;height:19px;background:#d8d8d8"></div><div class="t" style="left:5px;top:1142px;font-size:11px;letter-spacing:0.15px;line-height:16px">Configure Alarm Priority Mapping for the Galaxy</div><div class="t" style="left:1535px;top:1142px;font-size:11px;letter-spacing:0.1px">DefaultUser</div><div class="t" style="left:1737px;top:1142px;font-size:11px;letter-spacing:0.1px">ARM_1305 on COMP</div><svg style="left:1887px;top:1144px" width="15" height="12" viewBox="0 0 15 12"><rect x="0.5" y="0.5" width="14" height="11" fill="#cfe6fb" stroke="#3c8ad8"/><rect x="2" y="2" width="3" height="3" fill="#fff" stroke="#3c8ad8" stroke-width="0.6"/><path d="M6 6l2 3l5-7" stroke="#10a010" stroke-width="1.6" fill="none"/></svg><div class="a" style="left:0px;top:1160px;width:1920px;height:40px;background:#222"></div><div class="a" style="left:1915px;top:1160px;width:1px;height:40px;background:#5a5a5a"></div><svg style="left:16px;top:1172px" width="17" height="17" viewBox="0 0 17 17"><path d="M0 2.4L7 1.4V8H0zM8 1.3L17 0V8H8zM0 9H7V15.6L0 14.6zM8 9H17V17L8 15.7z" fill="#fff"/></svg><svg style="left:64px;top:1172px" width="17" height="17" viewBox="0 0 17 17"><circle cx="10.5" cy="6.5" r="5.5" fill="none" stroke="#fff" stroke-width="1.3"/><path d="M6.6 10.4L0.8 16.2" stroke="#fff" stroke-width="1.4"/></svg><svg style="left:110px;top:1172px" width="21" height="16" viewBox="0 0 21 16"><rect x="4.5" y="0.8" width="12" height="14.4" fill="none" stroke="#fff" stroke-width="1.2"/><path d="M2.5 2.5H0.6V13.5H2.5M18.5 2.5H20.4V13.5H18.5" fill="none" stroke="#fff" stroke-width="1.2"/></svg><svg style="left:160px;top:1171px" width="22" height="18" viewBox="0 0 22 18"><path d="M0 1h8l2 2h12v15H0z" fill="#f8d775"/><path d="M0 4h22v14H0z" fill="#fbe08c"/><rect x="0" y="1" width="8" height="1.2" fill="#e9b94a"/><path d="M4 11h14v7h-3v-4H7v4H4z" fill="#2b8fe0"/></svg><div class="a" style="left:196px;top:1160px;width:48px;height:40px;background:#484848"></div><div class="a" style="left:196px;top:1198px;width:48px;height:2px;background:#76b9ed"></div><div class="a" style="left:249px;top:1198px;width:40px;height:2px;background:#76b9ed"></div><div class="a" style="left:298px;top:1198px;width:40px;height:2px;background:#76b9ed"></div><svg style="left:207px;top:1167px" width="25" height="25" viewBox="0 0 18 18"><use href="#ico-arch"/></svg><svg style="left:257px;top:1168px" width="24" height="22" viewBox="0 0 24 22"><rect x="3" y="1" width="20" height="18" fill="#1b5f8a" stroke="#cde" stroke-width="1"/><path d="M3 19L23 1" stroke="#9de" stroke-width="1"/><path d="M1 10c4 0 8 4 8 10l4-2c0-4 4-8 10-16c-6 4-12 10-15 10z" fill="#4fd0f0"/></svg><svg style="left:306px;top:1168px" width="24" height="22" viewBox="0 0 24 22"><rect x="4" y="1" width="19" height="17" fill="#bde4f0" stroke="#e8f4f8"/><path d="M1 8l7-4 7 2-3 14z" fill="#2ac0d8"/><path d="M6 8l3 7 3-9" stroke="#fff" stroke-width="1.5" fill="none"/></svg><div class="a" style="left:1440px;top:1161px;width:189px;height:24px;background:#1c1c1c;border-bottom:1px solid #161616"></div><div class="t" style="left:1448px;top:1162px;font-size:16px;line-height:22px;color:#0e0e0e">Потвердить выбранное</div><div class="a" style="left:1685px;top:1161px;width:192px;height:24px;background:#1f1f1f;border-bottom:1px solid #181818"></div><div class="t" style="left:1723px;top:1162px;font-size:16px;line-height:22px;color:#111">Потвердить все</div><svg style="left:1638px;top:1172px" width="15" height="15" viewBox="0 0 15 15"><circle cx="10" cy="3.5" r="2.6" fill="none" stroke="#fff" stroke-width="1.1"/><circle cx="5" cy="7" r="2.6" fill="none" stroke="#fff" stroke-width="1.1"/><path d="M0.5 14.5c0-3 2-4.5 4.5-4.5s4.5 1.5 4.5 4.5M9 7.5c3 0 5.5 1 5.5 4" fill="none" stroke="#fff" stroke-width="1.1"/></svg><svg style="left:1675px;top:1176px" width="12" height="7" viewBox="0 0 12 7"><path d="M0.5 6.5L6 1L11.5 6.5" fill="none" stroke="#fff" stroke-width="1.2"/></svg><svg style="left:1698px;top:1172px" width="15" height="15" viewBox="0 0 15 15"><path d="M7.5 0L14.5 4v7L7.5 15L0.5 11V4z" fill="#3aa83a"/><text x="7.5" y="10.5" font-family="Liberation Sans" font-weight="bold" font-size="8" fill="#fff" text-anchor="middle">ex</text></svg><svg style="left:1721px;top:1172px" width="17" height="17" viewBox="0 0 17 17"><rect x="0.5" y="0.5" width="15" height="9" fill="none" stroke="#fff" stroke-width="1"/><rect x="1.5" y="1.5" width="4" height="3" fill="none" stroke="#fff" stroke-width="0.8"/><path d="M3 10v5h6" stroke="#fff" fill="none"/><path d="M12 8l4.5 8.5h-9z" fill="#f7c600"/><rect x="11.6" y="11" width="0.9" height="3" fill="#000"/></svg><svg style="left:1745px;top:1172px" width="17" height="16" viewBox="0 0 17 16"><path d="M0.5 5.5h3l4-4v13l-4-4h-3z" fill="none" stroke="#fff" stroke-width="1"/><path d="M10 5c1 1.5 1 4.5 0 6M12.5 3c2 2.5 2 7.5 0 10M15 1.5c2.5 3.5 2.5 9.5 0 13" fill="none" stroke="#bbb" stroke-width="1"/></svg><div class="t" style="left:1771px;top:1172px;font-size:11.5px;line-height:16px;color:#fff">ENG</div><div class="t" style="left:1820px;top:1163px;font-size:11.5px;line-height:16px;color:#fff">12:21</div><div class="t" style="left:1807px;top:1180px;font-size:11px;line-height:16px;color:#fff">20.05.2019</div><svg style="left:1879px;top:1172px" width="17" height="16" viewBox="0 0 17 16"><path d="M0.5 0.5h16v11h-8l-4 4v-4h-4z" fill="none" stroke="#fff" stroke-width="1"/></svg></body></html>
